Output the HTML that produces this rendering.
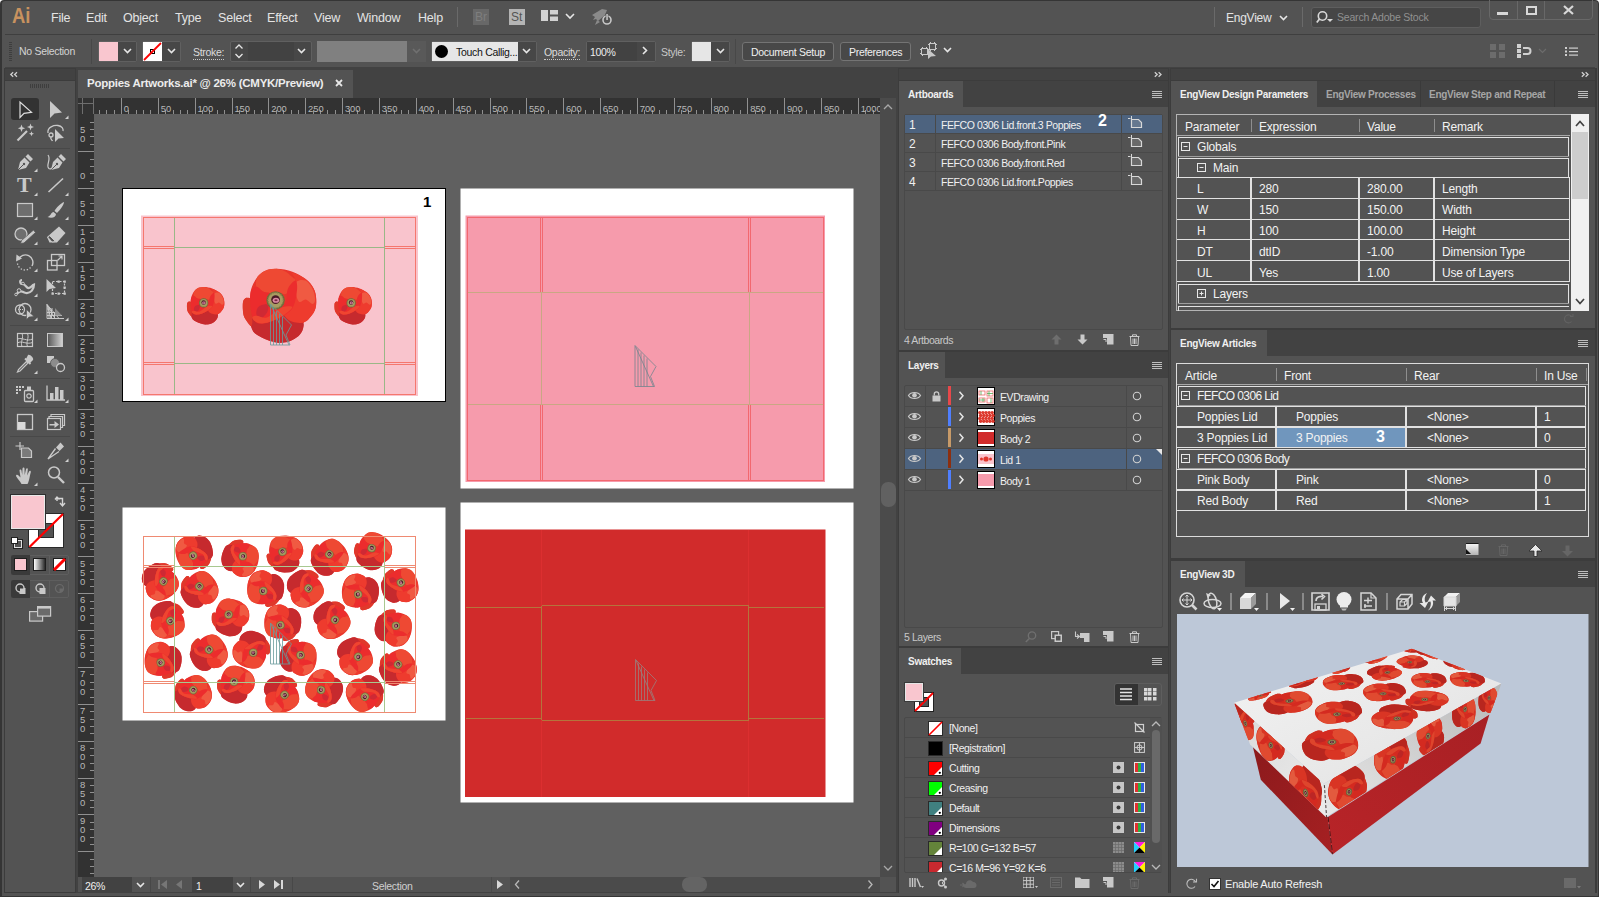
<!DOCTYPE html>
<html><head><meta charset="utf-8"><title>Poppies Artworks.ai</title>
<style>
*{box-sizing:border-box;margin:0;padding:0}
html,body{width:1600px;height:898px;overflow:hidden;background:#535353}
body{font-family:"Liberation Sans",sans-serif;font-size:11px;color:#dcdcdc;position:relative}
.a{position:absolute}
.pb{background:#535353}
.dk{background:#424242}
.t{position:absolute;white-space:nowrap;line-height:1;color:#dcdcdc}
.b{font-weight:bold}
svg{position:absolute;overflow:visible}
.chev{fill:none;stroke:#e6e6e6;stroke-width:1.6}
.ul{border-bottom:1px dotted #c8c8c8;padding-bottom:1px}
</style></head><body>
<!-- window frame -->
<div class="a" style="left:0;top:0;width:1600px;height:898px;background:#fff"></div>
<div class="a" style="left:0;top:0;width:1599px;height:897px;background:#353535;border-radius:4px 4px 0 0"></div>
<div class="a" style="left:2px;top:1px;width:1596px;height:895px;background:#535353;border-radius:3px 3px 0 0"></div>
<div class="a dk" style="left:5px;top:67px;width:1590px;height:826px"></div>
<!-- MENUBAR -->
<div class="a" style="left:5px;top:34px;width:1590px;height:1px;background:#3f3f3f"></div>
<div class="t b" style="left:11.5px;top:5px;font-size:22px;color:#c8925f;transform:scaleX(0.84);transform-origin:left">Ai</div>
<div class="t" style="left:51px;top:12px;font-size:12.5px;letter-spacing:-0.2px;color:#e4e4e4">File</div>
<div class="t" style="left:86px;top:12px;font-size:12.5px;letter-spacing:-0.2px;color:#e4e4e4">Edit</div>
<div class="t" style="left:123px;top:12px;font-size:12.5px;letter-spacing:-0.2px;color:#e4e4e4">Object</div>
<div class="t" style="left:175px;top:12px;font-size:12.5px;letter-spacing:-0.2px;color:#e4e4e4">Type</div>
<div class="t" style="left:218px;top:12px;font-size:12.5px;letter-spacing:-0.2px;color:#e4e4e4">Select</div>
<div class="t" style="left:267px;top:12px;font-size:12.5px;letter-spacing:-0.2px;color:#e4e4e4">Effect</div>
<div class="t" style="left:314px;top:12px;font-size:12.5px;letter-spacing:-0.2px;color:#e4e4e4">View</div>
<div class="t" style="left:357px;top:12px;font-size:12.5px;letter-spacing:-0.2px;color:#e4e4e4">Window</div>
<div class="t" style="left:418px;top:12px;font-size:12.5px;letter-spacing:-0.2px;color:#e4e4e4">Help</div>
<div class="a" style="left:457px;top:7px;width:1px;height:20px;background:#6a6a6a"></div>
<div class="a" style="left:473px;top:9px;width:16px;height:16px;background:#686868"></div>
<div class="t" style="left:475px;top:11px;font-size:12px;color:#7e7e7e">Br</div>
<div class="a" style="left:509px;top:9px;width:16px;height:16px;background:#b4b4b4"></div>
<div class="t" style="left:511px;top:11px;font-size:12px;color:#555">St</div>
<svg style="left:541px;top:10px" width="18" height="12"><rect x="0" y="0" width="7" height="11" fill="#d2d2d2"/><rect x="9" y="0" width="8" height="4.5" fill="#d2d2d2"/><rect x="9" y="6.5" width="8" height="4.5" fill="#d2d2d2"/></svg>
<svg style="left:565px;top:13px" width="10" height="6"><path class="chev" d="M1 1 L5 5 L9 1"/></svg>
<svg style="left:590px;top:7px" width="24" height="20"><path d="M2 8 L12 2 L17 3 L15 8 L8 14 L6 12 L3 13 L5 10 Z" fill="#8a8a8a"/><path d="M7 13 L5 18 L10 15Z" fill="#8a8a8a"/><circle cx="17" cy="13" r="4" fill="none" stroke="#c8c8c8" stroke-width="1.6"/><rect x="15.6" y="6.5" width="2.8" height="7" fill="#535353"/><rect x="16.3" y="7" width="1.5" height="6" fill="#c8c8c8"/></svg>
<!-- right side -->
<div class="a" style="left:1214px;top:7px;width:1px;height:20px;background:#6a6a6a"></div>
<div class="t" style="left:1226px;top:12px;font-size:12px;letter-spacing:-0.25px;color:#e4e4e4">EngView</div>
<svg style="left:1279px;top:15px" width="10" height="6"><path class="chev" d="M1 1 L4.5 4.5 L8 1"/></svg>
<div class="a" style="left:1302px;top:7px;width:1px;height:20px;background:#6a6a6a"></div>
<div class="a" style="left:1311px;top:7px;width:170px;height:21px;background:#464646;border:1px solid #5e5e5e;border-radius:3px"></div>
<svg style="left:1316px;top:10px" width="18" height="14"><circle cx="6.5" cy="6" r="4.2" fill="none" stroke="#d8d8d8" stroke-width="1.6"/><path d="M3.5 9 L0.8 12.5" stroke="#d8d8d8" stroke-width="1.8"/><path d="M11 9 L17 9 L14 12Z" fill="#d8d8d8"/></svg>
<div class="t" style="left:1337px;top:12px;font-size:10.5px;letter-spacing:-0.2px;color:#919191">Search Adobe Stock</div>
<div class="a" style="left:1489px;top:-3px;width:104px;height:23px;border:1px solid #686868;border-radius:0 0 4px 4px"></div>
<div class="a" style="left:1517px;top:1px;width:1px;height:18px;background:#686868"></div>
<div class="a" style="left:1544px;top:1px;width:1px;height:18px;background:#686868"></div>
<div class="a" style="left:1497px;top:12px;width:11px;height:3px;background:#d8d8d8"></div>
<div class="a" style="left:1526px;top:6px;width:11px;height:9px;border:2px solid #d8d8d8;border-top-width:2px"></div>
<svg style="left:1563px;top:5px" width="11" height="10"><path d="M1 1 L10 9 M10 1 L1 9" stroke="#d8d8d8" stroke-width="2.2"/></svg>

<!-- CONTROLBAR -->
<svg style="left:9px;top:42px" width="4" height="20"><g fill="#3e3e3e"><rect x="0" y="0" width="3" height="1"/><rect x="0" y="2" width="3" height="1"/><rect x="0" y="4" width="3" height="1"/><rect x="0" y="6" width="3" height="1"/><rect x="0" y="8" width="3" height="1"/><rect x="0" y="10" width="3" height="1"/><rect x="0" y="12" width="3" height="1"/><rect x="0" y="14" width="3" height="1"/><rect x="0" y="16" width="3" height="1"/><rect x="0" y="18" width="3" height="1"/></g></svg>
<div class="t" style="left:19px;top:46px;font-size:10.5px;letter-spacing:-0.3px;color:#d4d4d4">No Selection</div>
<div class="a" style="left:91px;top:39px;width:1px;height:25px;background:#484848"></div>
<!-- fill -->
<div class="a" style="left:98px;top:41px;width:39px;height:21px;border:1px solid #606060;border-radius:2px"></div>
<div class="a" style="left:118px;top:42px;width:18px;height:19px;background:#474747"></div>
<div class="a" style="left:99px;top:42px;width:19px;height:19px;background:#f9c6cf"></div>
<svg style="left:123px;top:48px" width="10" height="6"><path class="chev" d="M1 1 L4.5 4.5 L8 1"/></svg>
<!-- stroke -->
<div class="a" style="left:142px;top:41px;width:39px;height:21px;border:1px solid #606060;border-radius:2px"></div>
<div class="a" style="left:162px;top:42px;width:18px;height:19px;background:#474747"></div>
<div class="a" style="left:143px;top:42px;width:19px;height:19px;background:#fff"></div>
<svg style="left:143px;top:42px" width="19" height="19"><rect x="7.5" y="7.5" width="4" height="4" fill="none" stroke="#000" stroke-width="1"/><path d="M1 18 L18 1" stroke="#f00" stroke-width="1.8"/></svg>
<svg style="left:167px;top:48px" width="10" height="6"><path class="chev" d="M1 1 L4.5 4.5 L8 1"/></svg>
<div class="t" style="left:193px;top:47px;font-size:10.5px;letter-spacing:-0.3px;color:#dcdcdc"><span class="ul">Stroke:</span></div>
<div class="a" style="left:230px;top:41px;width:82px;height:21px;border:1px solid #606060;border-radius:2px;background:#474747"></div>
<div class="a" style="left:248px;top:42px;width:46px;height:19px;background:#424242"></div>
<svg style="left:234px;top:44px" width="10" height="15"><path class="chev" d="M1.5 4.5 L5 1 L8.5 4.5 M1.5 10 L5 13.5 L8.5 10" style="stroke-width:1.3"/></svg>
<svg style="left:297px;top:48px" width="10" height="6"><path class="chev" d="M1 1 L4.5 4.5 L8 1"/></svg>
<div class="a" style="left:317px;top:41px;width:90px;height:21px;background:#808080"></div>
<div class="a" style="left:407px;top:41px;width:19px;height:21px;background:#595959"></div>
<svg style="left:412px;top:48px" width="10" height="6"><path class="chev" d="M1 1 L4.5 4.5 L8 1" style="stroke:#707070"/></svg>
<!-- brush -->
<div class="a" style="left:431px;top:41px;width:106px;height:21px;border:1px solid #606060;border-radius:2px"></div>
<div class="a" style="left:518px;top:42px;width:18px;height:19px;background:#474747"></div>
<div class="a" style="left:432px;top:42px;width:86px;height:19px;background:#e6e6e6"></div>
<div class="a" style="left:435px;top:45px;width:13px;height:13px;background:#000;border-radius:50%"></div>
<div class="t" style="left:456px;top:47px;font-size:10.5px;letter-spacing:-0.3px;color:#111">Touch Callig...</div>
<svg style="left:522px;top:48px" width="10" height="6"><path class="chev" d="M1 1 L4.5 4.5 L8 1"/></svg>
<div class="t" style="left:544px;top:47px;font-size:10.5px;letter-spacing:-0.3px;color:#dcdcdc"><span class="ul">Opacity:</span></div>
<div class="a" style="left:586px;top:41px;width:70px;height:21px;border:1px solid #606060;border-radius:2px"></div>
<div class="a" style="left:637px;top:42px;width:18px;height:19px;background:#474747"></div>
<div class="a" style="left:587px;top:42px;width:50px;height:19px;background:#424242"></div>
<div class="t" style="left:590px;top:47px;font-size:10.5px;letter-spacing:-0.3px;color:#ececec">100%</div>
<svg style="left:642px;top:46px" width="7" height="10"><path class="chev" d="M1 1 L4.5 4.5 L1 8"/></svg>
<div class="t" style="left:661px;top:47px;font-size:10.5px;letter-spacing:-0.3px;color:#c8c8c8">Style:</div>
<div class="a" style="left:691px;top:41px;width:39px;height:21px;border:1px solid #606060;border-radius:2px"></div>
<div class="a" style="left:711px;top:42px;width:18px;height:19px;background:#474747"></div>
<div class="a" style="left:692px;top:42px;width:19px;height:19px;background:#e6e6e6"></div>
<svg style="left:716px;top:48px" width="10" height="6"><path class="chev" d="M1 1 L4.5 4.5 L8 1"/></svg>
<div class="a" style="left:735px;top:39px;width:1px;height:25px;background:#484848"></div>
<div class="a" style="left:742px;top:42px;width:92px;height:19px;border:1px solid #747474;border-radius:3px;background:#484848"></div>
<div class="t" style="left:751px;top:47px;font-size:10.5px;letter-spacing:-0.3px;color:#f0f0f0">Document Setup</div>
<div class="a" style="left:840px;top:42px;width:71px;height:19px;border:1px solid #747474;border-radius:3px;background:#484848"></div>
<div class="t" style="left:849px;top:47px;font-size:10.5px;letter-spacing:-0.3px;color:#f0f0f0">Preferences</div>
<svg style="left:920px;top:42px" width="18" height="18"><rect x="1.5" y="6.500" width="6" height="6" fill="none" stroke="#c8c8c8"/><rect x="9.5" y="1.5" width="6" height="6" fill="none" stroke="#c8c8c8"/><path d="M0 7.500h1.500 M0 11.500h1.500 M7.500 7.500h1.500 M7.500 11.500 h1.500M2.500 5v1.500M6.500 5v1.500M2.500 12.500v1.500M10.500 0v1.500M14.500 0v1.500M10.500 7.500v1.500M14.500 7.500v1.500M8 2.500h1.500M15.500 2.500h1.500M15.500 6.500h1.500" stroke="#c8c8c8"/><path d="M8 7 L8 17 L11 14.500 L16 14 Z" fill="#c8c8c8"/></svg>
<svg style="left:943px;top:47px" width="10" height="6"><path class="chev" d="M1 1 L4.5 4.5 L8 1"/></svg>
<!-- right icons -->
<svg style="left:1490px;top:44px" width="18" height="15"><g fill="#6c6c6c"><rect x="0" y="0" width="6" height="6"/><rect x="9" y="0" width="6" height="6"/><rect x="0" y="8" width="6" height="6"/><rect x="9" y="8" width="6" height="6"/></g></svg>
<svg style="left:1516px;top:43px" width="18" height="16"><g fill="#d0d0d0"><rect x="1" y="1" width="4" height="4"/><rect x="1" y="6" width="4" height="4"/><rect x="1" y="11" width="4" height="4"/></g><path d="M7 5 H11.500 A3 3 0 0 1 11.500 11 H7" fill="none" stroke="#d0d0d0" stroke-width="2"/></svg>
<svg style="left:1538px;top:48px" width="10" height="6"><path class="chev" d="M1 1 L4.5 4.5 L8 1" style="stroke:#6c6c6c;stroke-width:1.2"/></svg>
<svg style="left:1565px;top:46px" width="14" height="11"><g fill="#d0d0d0"><rect x="0" y="1" width="2" height="2"/><rect x="4" y="1.500" width="9" height="1.200"/><rect x="0" y="4.500" width="2" height="2"/><rect x="4" y="5" width="9" height="1.200"/><rect x="0" y="8" width="2" height="2"/><rect x="4" y="8.500" width="9" height="1.200"/></g></svg>

<!-- TOOLS -->
<div class="a" style="left:4px;top:68px;width:72px;height:825px;background:#3c3c3c"></div>
<div class="a dk" style="left:5px;top:69px;width:70px;height:11px"></div>
<div class="a pb" style="left:5px;top:81px;width:70px;height:811px"></div>
<svg style="left:10px;top:72px" width="8" height="5"><path d="M3.200 0.300 L0.800 2.500 L3.200 4.700 M7 0.300 L4.600 2.500 L7 4.700" fill="none" stroke="#d0d0d0" stroke-width="1.300"/></svg>
<svg style="left:30px;top:84px" width="20" height="4"><g fill="#3e3e3e"><rect x="0" y="0" width="1" height="4"/><rect x="2" y="0" width="1" height="4"/><rect x="4" y="0" width="1" height="4"/><rect x="6" y="0" width="1" height="4"/><rect x="8" y="0" width="1" height="4"/><rect x="10" y="0" width="1" height="4"/><rect x="12" y="0" width="1" height="4"/><rect x="14" y="0" width="1" height="4"/><rect x="16" y="0" width="1" height="4"/><rect x="18" y="0" width="1" height="4"/></g></svg>
<div class="a" style="left:10px;top:148px;width:60px;height:1px;background:#484848"></div>
<div class="a" style="left:10px;top:248px;width:60px;height:1px;background:#484848"></div>
<div class="a" style="left:10px;top:325px;width:60px;height:1px;background:#484848"></div>
<div class="a" style="left:10px;top:378px;width:60px;height:1px;background:#484848"></div>
<div class="a" style="left:10px;top:407px;width:60px;height:1px;background:#484848"></div>
<div class="a" style="left:10px;top:436px;width:60px;height:1px;background:#484848"></div>
<div class="a" style="left:10px;top:489px;width:60px;height:1px;background:#484848"></div>
<div class="a" style="left:11px;top:98px;width:28px;height:22px;background:#323232;border-radius:3px"></div>
<svg style="left:25.0px;top:109.0px" width="1" height="1"><g fill="none" stroke="#c9c9c9" stroke-width="1.300"><path d="M-5 -7 L-5 8.500 L-1 4.300 L6.500 3.300 Z" stroke="#dedede" stroke-width="1.200"/></g></svg>
<svg style="left:55.5px;top:109.0px" width="1" height="1"><g fill="none" stroke="#c9c9c9" stroke-width="1.300"><path d="M-6 -8 L-6 9 L-1.500 4.500 L6 3.500 Z" fill="#c9c9c9" stroke="none"/></g><path d="M9 10 L12.500 10 L12.500 6.500 Z" fill="#d0d0d0"/></svg>
<svg style="left:25.0px;top:133.0px" width="1" height="1"><g fill="none" stroke="#c9c9c9" stroke-width="1.300"><path d="M-7.500 7.500 L2 -2" stroke-width="2.200"/><path d="M5.500 -9.500 L6.400 -7 L9 -6 L6.400 -5 L5.500 -2.500 L4.600 -5 L2 -6 L4.600 -7Z M-3.500 -8.500 L-2.500 -5.800 L0.200 -4.800 L-2.500 -3.800 L-3.500 -1 L-4.500 -3.800 L-7.200 -4.800 L-4.500 -5.800Z M6.500 -1.800 L7.200 0 L9 0.700 L7.200 1.400 L6.500 3.200 L5.800 1.400 L4 0.700 L5.800 0Z" fill="#c9c9c9" stroke="none"/></g></svg>
<svg style="left:55.5px;top:133.0px" width="1" height="1"><g fill="none" stroke="#c9c9c9" stroke-width="1.300"><path d="M-8 0 C-9 -6 -2 -8 2 -7.500 C6 -7 7.500 -4 7 -2" stroke-width="1.300"/><circle cx="-5" cy="2" r="2"/><path d="M-5 4 C-6 6 -4 7 -3.500 8" /><path d="M-1 -4 L-1 9 L2.500 5.500 L8 5 Z" fill="#c9c9c9" stroke="none"/></g></svg>
<svg style="left:25.0px;top:162.0px" width="1" height="1"><g fill="none" stroke="#c9c9c9" stroke-width="1.300"><path d="M3 -8 L8 -3 L5.500 -0.500 L0.500 -5.500 Z M-0.500 -4.500 L4.500 0.500 L1 6 L-7 8 L-5 0 Z" fill="#c9c9c9" stroke="none"/><path d="M-7 8 L-1.500 2.500" stroke="#535353" stroke-width="1"/><circle cx="-1" cy="2" r="1.200" fill="#535353" stroke="none"/></g><path d="M9 10 L12.500 10 L12.500 6.500 Z" fill="#d0d0d0"/></svg>
<svg style="left:57.5px;top:162.0px" width="1" height="1"><g fill="none" stroke="#c9c9c9" stroke-width="1.300"><path d="M3 -8 L8 -3 L5.500 -0.500 L0.500 -5.500 Z M-0.500 -4.500 L4.500 0.500 L1 6 L-7 8 L-5 0 Z" fill="#c9c9c9" stroke="none"/><path d="M-7 8 L-1.500 2.500" stroke="#535353" stroke-width="1"/><circle cx="-1" cy="2" r="1.200" fill="#535353" stroke="none"/><path d="M-10 -7 C-7 -3 -11 1 -10 5 C-9 8 -7 7 -6 6" stroke-width="1.200"/></g></svg>
<div class="t b" style="left:17px;top:174px;font-family:'Liberation Serif',serif;font-size:22px;color:#c9c9c9">T</div>
<svg style="left:25.0px;top:186.0px" width="1" height="1"><g fill="none" stroke="#c9c9c9" stroke-width="1.300"></g><path d="M9 10 L12.500 10 L12.500 6.500 Z" fill="#d0d0d0"/></svg>
<svg style="left:55.5px;top:186.0px" width="1" height="1"><g fill="none" stroke="#c9c9c9" stroke-width="1.300"><path d="M-7.500 6 L7 -7.500" stroke-width="1.600"/></g><path d="M9 10 L12.500 10 L12.500 6.500 Z" fill="#d0d0d0"/></svg>
<svg style="left:25.0px;top:210.0px" width="1" height="1"><g fill="none" stroke="#c9c9c9" stroke-width="1.300"><rect x="-7.500" y="-6.500" width="15" height="13" fill="#6e6e6e" stroke-width="1.200"/></g><path d="M9 10 L12.500 10 L12.500 6.500 Z" fill="#d0d0d0"/></svg>
<svg style="left:55.5px;top:210.0px" width="1" height="1"><g fill="none" stroke="#c9c9c9" stroke-width="1.300"><path d="M8 -8 C5 -7 0 -2 -1.500 1 L1 3 C4 0 8 -5 8 -8Z M-2.500 2 C-5 2 -5 6 -8.500 7 C-4 9 0 7 0 4 Z" fill="#c9c9c9" stroke="none"/></g><path d="M9 10 L12.500 10 L12.500 6.500 Z" fill="#d0d0d0"/></svg>
<svg style="left:25.0px;top:235.0px" width="1" height="1"><g fill="none" stroke="#c9c9c9" stroke-width="1.300"><circle cx="-4" cy="-1" r="6" fill="#6e6e6e" stroke-width="1.300"/><path d="M8.500 -5 L10.500 -2.500 L-1 8 L-4.500 8.500 L-3.500 5.500 Z" fill="#c9c9c9" stroke="#535353" stroke-width="0.800"/></g><path d="M9 10 L12.500 10 L12.500 6.500 Z" fill="#d0d0d0"/></svg>
<svg style="left:55.5px;top:235.0px" width="1" height="1"><g fill="none" stroke="#c9c9c9" stroke-width="1.300"><path d="M3 -8.500 L9.500 -2 L1 7.500 L-6.500 7.500 L-9 2 Z" fill="#c9c9c9" stroke="none"/><path d="M-6.500 0.500 L-0.500 6.500 L-4 7 L-8 2.500Z" fill="#535353" stroke="#c9c9c9" stroke-width="1"/></g><path d="M9 10 L12.500 10 L12.500 6.500 Z" fill="#d0d0d0"/></svg>
<svg style="left:25.0px;top:262.0px" width="1" height="1"><g fill="none" stroke="#c9c9c9" stroke-width="1.300"><path d="M-6.500 -2.500 A7.500 7.500 0 1 1 7 4" stroke-width="1.400" /><path d="M5.500 5.500 A7.500 7.500 0 0 1 -7.500 1.500" stroke-width="1.300" stroke-dasharray="1.300 1.800"/><path d="M-8.500 -7.500 L-3 -3.500 L-9 -0.500 Z" fill="#c9c9c9" stroke="none"/></g><path d="M9 10 L12.500 10 L12.500 6.500 Z" fill="#d0d0d0"/></svg>
<svg style="left:55.5px;top:262.0px" width="1" height="1"><g fill="none" stroke="#c9c9c9" stroke-width="1.300"><rect x="-8.500" y="-1.500" width="9.500" height="9.500"/><rect x="-4.500" y="-7.500" width="13" height="11"/><path d="M1.500 -1.500 L6 -6 M2.500 -6 L6 -6 L6 -2.500" stroke-width="1.200"/></g><path d="M9 10 L12.500 10 L12.500 6.500 Z" fill="#d0d0d0"/></svg>
<svg style="left:25.0px;top:287.0px" width="1" height="1"><g fill="none" stroke="#c9c9c9" stroke-width="1.300"><path d="M-3 -7 C-6 -7 -5 -3 -2.500 -3 C1 -3 1 1.500 4 1 C7 0 7 -2 9 -2.500 C9 2 6 6.500 1 6 C-3 5.500 -3 3 -6 5 C-8 6.500 -9 7.500 -9.500 7.500" stroke-width="2.200"/><circle cx="-6" cy="3.500" r="1.800" fill="#535353" stroke-width="1"/><circle cx="-2" cy="-3.500" r="1.300" fill="#535353" stroke-width="0.900"/><circle cx="-9" cy="7.500" r="1.300" fill="#535353" stroke-width="0.900"/></g><path d="M9 10 L12.500 10 L12.500 6.500 Z" fill="#d0d0d0"/></svg>
<svg style="left:55.5px;top:287.0px" width="1" height="1"><g fill="none" stroke="#c9c9c9" stroke-width="1.300"><rect x="-3.500" y="-5.500" width="12" height="12" stroke-dasharray="2 1.500" stroke-width="1.200"/><path d="M-9.500 -8 L-9.500 5 L-6.500 2 L0 1 Z" fill="#c9c9c9" stroke="none"/><g fill="#c9c9c9" stroke="none"><rect x="7.500" y="-6.500" width="2.300" height="2.300"/><rect x="7.500" y="5.500" width="2.300" height="2.300"/><rect x="-4.500" y="5.500" width="2.300" height="2.300"/><rect x="1.500" y="-6.500" width="2.300" height="2.300"/><rect x="7.500" y="-0.500" width="2.300" height="2.300"/><rect x="1.500" y="5.500" width="2.300" height="2.300"/></g></g></svg>
<svg style="left:25.0px;top:311.0px" width="1" height="1"><g fill="none" stroke="#c9c9c9" stroke-width="1.300"><ellipse cx="-5" cy="-1.500" rx="4.500" ry="4.500"/><ellipse cx="0" cy="-1.500" rx="6" ry="6"/><path d="M-7 -1.500 H0" stroke-dasharray="1 1" stroke-width="1"/><path d="M1.500 -1.500 L1.500 8.500 L4 6 L9 5.500 Z" fill="#c9c9c9" stroke="#535353" stroke-width="0.600"/></g><path d="M9 10 L12.500 10 L12.500 6.500 Z" fill="#d0d0d0"/></svg>
<svg style="left:55.5px;top:311.0px" width="1" height="1"><g fill="none" stroke="#c9c9c9" stroke-width="1.300"><path d="M-9 -6.500 L-9 7.500 L8 7.500 M-9 -6.500 L3 7.500 M-9 -6.500 L-1 7.500 M-9 -6.500 L-5 7.500 M-7 -4 L-7 7.500 M-4.500 -1 L-4.500 7.500 M-1.500 2 L-1.500 7.500 M-9 4.500 L6 4.500 M-9 1.500 L3 1.500 M-9 -2 L-3 -2 " stroke-width="1"/><path d="M-1 -3 L6 4.500 L-1 4.500Z" fill="#8a8a8a" stroke="none"/></g><path d="M9 10 L12.500 10 L12.500 6.500 Z" fill="#d0d0d0"/></svg>
<svg style="left:25.0px;top:340.0px" width="1" height="1"><g fill="none" stroke="#c9c9c9" stroke-width="1.300"><rect x="-7.500" y="-6.500" width="15" height="13" stroke-width="1.200"/><path d="M-7.500 -1 C-3 -3 2 2 7.500 -1 M-7.500 3 C-3 0 1 5 7.500 2.500 M-3 -6.500 C-1 -2 -5 2 -3 6.500 M2.500 -6.500 C4.500 -2 0.500 2 2.500 6.500" stroke-width="1"/></g></svg>
<div class="a" style="left:47px;top:333px;width:16px;height:14px;border:1px solid #c9c9c9;background:linear-gradient(90deg,#5a5a5a,#cfcfcf)"></div>
<svg style="left:25.0px;top:364.0px" width="1" height="1"><g fill="none" stroke="#c9c9c9" stroke-width="1.300"><path d="M3 -9 C5 -10 9 -6 8 -4 L5 -1 L1 -5 Z" fill="#c9c9c9" stroke="none"/><path d="M0 -5.500 L5.500 0" stroke-width="1.800"/><path d="M1.500 -2.500 L-6.500 5.500 L-7.500 8 L-5 7 L3 -1 Z" stroke-width="1.200"/></g><path d="M9 10 L12.500 10 L12.500 6.500 Z" fill="#d0d0d0"/></svg>
<svg style="left:55.5px;top:364.0px" width="1" height="1"><g fill="none" stroke="#c9c9c9" stroke-width="1.300"><rect x="-9" y="-8" width="7" height="7" fill="#c9c9c9" stroke="none"/><circle cx="-1" cy="-1" r="4.500" fill="#8c8c8c" stroke="#535353" stroke-width="0.800"/><circle cx="4.500" cy="3.500" r="4" fill="#535353" stroke-width="1.300"/></g></svg>
<svg style="left:25.0px;top:393.0px" width="1" height="1"><g fill="none" stroke="#c9c9c9" stroke-width="1.300"><rect x="-0.500" y="-2.500" width="9" height="11" rx="1" stroke-width="1.300"/><rect x="2" y="-6.500" width="4" height="4" fill="#c9c9c9" stroke="none"/><circle cx="4" cy="3" r="2.200" stroke-width="1.200"/><g fill="#c9c9c9" stroke="none"><rect x="-9" y="-7" width="2" height="2"/><rect x="-6" y="-7" width="2" height="2"/><rect x="-3" y="-7" width="2" height="2"/><rect x="-9" y="-4" width="2" height="2"/><rect x="-6" y="-4" width="2" height="2"/><rect x="-9" y="-1" width="2" height="2"/></g></g><path d="M9 10 L12.500 10 L12.500 6.500 Z" fill="#d0d0d0"/></svg>
<svg style="left:55.5px;top:393.0px" width="1" height="1"><g fill="none" stroke="#c9c9c9" stroke-width="1.300"><path d="M-9 -7.500 L-9 7 L9 7" stroke-width="1.300"/><g fill="#c9c9c9" stroke="none"><rect x="-6" y="0" width="3.500" height="7"/><rect x="-1" y="-6" width="3.500" height="13"/><rect x="4" y="-3" width="3.500" height="10"/></g></g><path d="M9 10 L12.500 10 L12.500 6.500 Z" fill="#d0d0d0"/></svg>
<svg style="left:25.0px;top:422.0px" width="1" height="1"><g fill="none" stroke="#c9c9c9" stroke-width="1.300"><rect x="-7.500" y="-7.500" width="15" height="15" fill="none" stroke="#c9c9c9" stroke-width="1.300"/><rect x="-7" y="0" width="7.500" height="7" fill="#dadada" stroke="none"/></g></svg>
<svg style="left:55.5px;top:422.0px" width="1" height="1"><g fill="none" stroke="#c9c9c9" stroke-width="1.300"><path d="M-5 -5.500 V-7.500 H8.500 V3.500 H6.500 M-7 -3.500 V-5.500 H6.500 V5.500 H4.500" stroke-width="1.200"/><rect x="-8.500" y="-3.500" width="13" height="11" fill="#535353" stroke-width="1.200"/><path d="M-6.500 2 H-1.500 V-1 L3 2.500 L-1.500 6 V3.500 H-6.500Z" fill="#c9c9c9" stroke="none"/></g></svg>
<svg style="left:25.0px;top:452.0px" width="1" height="1"><g fill="none" stroke="#c9c9c9" stroke-width="1.300"><path d="M-5 -10 V-2 M-9.500 -6 H-1" stroke-width="1.200"/><path d="M-3.500 -4 H3.500 L6.500 -1 V5.500 H-3.500Z" fill="#7a7a7a" stroke-width="1.200"/></g></svg>
<svg style="left:55.5px;top:452.0px" width="1" height="1"><g fill="none" stroke="#c9c9c9" stroke-width="1.300"><path d="M4.500 -9.500 L8 -5.500 L3.500 -1 L0 -4.500 Z" fill="#c9c9c9" stroke="none"/><path d="M-0.500 -3.500 L-8 7 L3 -0.500" stroke-width="1.300"/></g><path d="M9 10 L12.500 10 L12.500 6.500 Z" fill="#d0d0d0"/></svg>
<svg style="left:25.0px;top:475.5px" width="1" height="1"><g fill="none" stroke="#c9c9c9" stroke-width="1.300"><path d="M-3.500 8 C-5 5 -8 2 -9 0 C-9 -1.500 -7.500 -1.500 -6.500 -0.500 L-4.500 1.500 L-5.500 -5.500 C-5.500 -7 -3.800 -7 -3.500 -5.500 L-2.800 -1 L-2.500 -7.500 C-2.300 -9 -0.500 -9 -0.500 -7.500 L-0.300 -1 L1 -6.800 C1.300 -8.200 3 -8 2.800 -6.500 L2.200 -0.500 L4 -4.500 C4.600 -5.800 6.200 -5.200 5.800 -3.800 C5 -1 4.500 2 4 4 C3.500 6 3 7 2.500 8 Z" fill="#c9c9c9" stroke="none"/></g><path d="M9 10 L12.500 10 L12.500 6.500 Z" fill="#d0d0d0"/></svg>
<svg style="left:55.5px;top:475.0px" width="1" height="1"><g fill="none" stroke="#c9c9c9" stroke-width="1.300"><circle cx="-2" cy="-2.500" r="5.500" stroke-width="1.500"/><path d="M2 2 L8 8" stroke-width="2.400"/></g></svg>
<div class="a" style="left:28px;top:513px;width:36px;height:35px;background:#fff;border:1px solid #2a2a2a"></div>
<div class="a" style="left:38px;top:523px;width:16px;height:15px;background:#535353;border:1px solid #2a2a2a"></div>
<svg style="left:28px;top:513px" width="36" height="35"><path d="M1.500 34 L35 1" stroke="#f00" stroke-width="2.200"/></svg>
<div class="a" style="left:10px;top:494px;width:36px;height:36px;background:#f9c6cf;border:1px solid #2f2f2f;box-shadow:inset 0 0 0 1px #e9e9e9"></div>
<svg style="left:54px;top:496px" width="12" height="12"><path d="M3 1.500 L3 5 M1 3.500 L3 1 L5.500 3.500 M3 2.500 H8.500 V9 M6 7 L8.500 10 L11 7" fill="none" stroke="#d4d4d4" stroke-width="1.400"/></svg>
<div class="a" style="left:14px;top:540px;width:8px;height:8px;background:#535353;border:1px solid #e0e0e0;box-shadow:0 0 0 1px #222"></div>
<div class="a" style="left:11px;top:537px;width:7px;height:7px;background:#fff;border:1px solid #222"></div>
<div class="a" style="left:11px;top:555px;width:58px;height:20px;border:1px solid #5e5e5e;border-radius:2px"></div>
<div class="a" style="left:11px;top:555px;width:19px;height:20px;background:#3a3a3a;border-radius:2px 0 0 2px"></div>
<div class="a" style="left:49px;top:556px;width:1px;height:18px;background:#5e5e5e"></div>
<div class="a" style="left:14px;top:558px;width:13px;height:13px;background:#f9c6cf;border:1px solid #1e1e1e"></div>
<div class="a" style="left:33px;top:558px;width:13px;height:13px;background:linear-gradient(90deg,#fff,#2a2a2a);border:1px solid #1e1e1e"></div>
<div class="a" style="left:53px;top:558px;width:13px;height:13px;background:#fff;border:1px solid #1e1e1e"></div>
<svg style="left:53px;top:558px" width="13" height="13"><path d="M1 12 L12 1" stroke="#f00" stroke-width="3"/></svg>
<div class="a" style="left:11px;top:580px;width:58px;height:18px;border:1px solid #5e5e5e;border-radius:2px"></div>
<div class="a" style="left:11px;top:580px;width:19px;height:18px;background:#3a3a3a;border-radius:2px 0 0 2px"></div>
<div class="a" style="left:49px;top:581px;width:1px;height:16px;background:#5e5e5e"></div>
<svg style="left:15px;top:583px" width="12" height="12"><rect x="4.500" y="5" width="6" height="6" fill="#c9c9c9"/><circle cx="5" cy="5" r="4" fill="#3a3a3a" stroke="#c9c9c9" stroke-width="1.400"/><rect x="5" y="5.500" width="5" height="5" fill="#c9c9c9"/></svg>
<svg style="left:35px;top:583px" width="12" height="12"><rect x="4.500" y="5" width="6" height="6" fill="#c9c9c9"/><circle cx="5" cy="5" r="4" fill="none" stroke="#c9c9c9" stroke-width="1.400"/></svg>
<svg style="left:54px;top:583px" width="12" height="12"><circle cx="5.500" cy="5.500" r="4" fill="none" stroke="#6a6a6a" stroke-width="1.200"/><path d="M5.500 5.500 h4 a4 4 0 0 1 -4 4z" fill="#6a6a6a"/></svg>
<svg style="left:29px;top:606px" width="23" height="16"><rect x="0.600" y="5.600" width="13" height="9.500" fill="#6a6a6a" stroke="#c9c9c9" stroke-width="1.200"/><rect x="8.600" y="0.600" width="13" height="9.500" fill="#6a6a6a" stroke="#c9c9c9" stroke-width="1.200"/><rect x="8.600" y="0.600" width="13" height="2" fill="#c9c9c9"/></svg>

<!-- DOC -->
<div class="a pb" style="left:78px;top:70px;width:275px;height:28px"></div>
<div class="t b" style="left:87px;top:78px;font-size:11.5px;color:#ececec;letter-spacing:-0.25px">Poppies Artworks.ai* @ 26% (CMYK/Preview)</div>
<svg style="left:335px;top:79px" width="8" height="8"><path d="M1 1 L7 7 M7 1 L1 7" stroke="#e6e6e6" stroke-width="1.800"/></svg>
<div class="a" style="left:78px;top:98px;width:802px;height:16px;background:#323232"></div>
<div class="a" style="left:78px;top:114px;width:16px;height:763px;background:#323232"></div>
<div class="a" style="left:94px;top:114px;width:786px;height:763px;background:#606060"></div>
<svg style="left:0;top:0" width="1600" height="898"><g stroke="#909090" stroke-width="1" shape-rendering="crispEdges"><path d="M78 103.500 H94 M82.500 98 V114 M93.500 98 V114" stroke="#6e6e6e"/><path d="M99.5 110 V114"/><path d="M106.5 110 V114"/><path d="M114.5 110 V114"/><path d="M121.5 98 V114"/><path d="M128.5 110 V114"/><path d="M136.5 110 V114"/><path d="M143.5 110 V114"/><path d="M150.5 110 V114"/><path d="M158.5 98 V114"/><path d="M165.5 110 V114"/><path d="M173.5 110 V114"/><path d="M180.5 110 V114"/><path d="M187.5 110 V114"/><path d="M195.5 98 V114"/><path d="M202.5 110 V114"/><path d="M209.5 110 V114"/><path d="M217.5 110 V114"/><path d="M224.5 110 V114"/><path d="M232.5 98 V114"/><path d="M239.5 110 V114"/><path d="M246.5 110 V114"/><path d="M254.5 110 V114"/><path d="M261.5 110 V114"/><path d="M268.5 98 V114"/><path d="M276.5 110 V114"/><path d="M283.5 110 V114"/><path d="M291.5 110 V114"/><path d="M298.5 110 V114"/><path d="M305.5 98 V114"/><path d="M313.5 110 V114"/><path d="M320.5 110 V114"/><path d="M327.5 110 V114"/><path d="M335.5 110 V114"/><path d="M342.5 98 V114"/><path d="M349.5 110 V114"/><path d="M357.5 110 V114"/><path d="M364.5 110 V114"/><path d="M372.5 110 V114"/><path d="M379.5 98 V114"/><path d="M386.5 110 V114"/><path d="M394.5 110 V114"/><path d="M401.5 110 V114"/><path d="M408.5 110 V114"/><path d="M416.5 98 V114"/><path d="M423.5 110 V114"/><path d="M431.5 110 V114"/><path d="M438.5 110 V114"/><path d="M445.5 110 V114"/><path d="M453.5 98 V114"/><path d="M460.5 110 V114"/><path d="M467.5 110 V114"/><path d="M475.5 110 V114"/><path d="M482.5 110 V114"/><path d="M490.5 98 V114"/><path d="M497.5 110 V114"/><path d="M504.5 110 V114"/><path d="M512.5 110 V114"/><path d="M519.5 110 V114"/><path d="M526.5 98 V114"/><path d="M534.5 110 V114"/><path d="M541.5 110 V114"/><path d="M548.5 110 V114"/><path d="M556.5 110 V114"/><path d="M563.5 98 V114"/><path d="M571.5 110 V114"/><path d="M578.5 110 V114"/><path d="M585.5 110 V114"/><path d="M593.5 110 V114"/><path d="M600.5 98 V114"/><path d="M607.5 110 V114"/><path d="M615.5 110 V114"/><path d="M622.5 110 V114"/><path d="M630.5 110 V114"/><path d="M637.5 98 V114"/><path d="M644.5 110 V114"/><path d="M652.5 110 V114"/><path d="M659.5 110 V114"/><path d="M666.5 110 V114"/><path d="M674.5 98 V114"/><path d="M681.5 110 V114"/><path d="M688.5 110 V114"/><path d="M696.5 110 V114"/><path d="M703.5 110 V114"/><path d="M711.5 98 V114"/><path d="M718.5 110 V114"/><path d="M725.5 110 V114"/><path d="M733.5 110 V114"/><path d="M740.5 110 V114"/><path d="M747.5 98 V114"/><path d="M755.5 110 V114"/><path d="M762.5 110 V114"/><path d="M770.5 110 V114"/><path d="M777.5 110 V114"/><path d="M784.5 98 V114"/><path d="M792.5 110 V114"/><path d="M799.5 110 V114"/><path d="M806.5 110 V114"/><path d="M814.5 110 V114"/><path d="M821.5 98 V114"/><path d="M829.5 110 V114"/><path d="M836.5 110 V114"/><path d="M843.5 110 V114"/><path d="M851.5 110 V114"/><path d="M858.5 98 V114"/><path d="M865.5 110 V114"/><path d="M873.5 110 V114"/><path d="M90 122.5 H94"/><path d="M90 129.5 H94"/><path d="M90 136.5 H94"/><path d="M90 144.5 H94"/><path d="M78 151.5 H94"/><path d="M90 159.5 H94"/><path d="M90 166.5 H94"/><path d="M90 173.5 H94"/><path d="M90 181.5 H94"/><path d="M78 188.5 H94"/><path d="M90 195.5 H94"/><path d="M90 203.5 H94"/><path d="M90 210.5 H94"/><path d="M90 217.5 H94"/><path d="M78 225.5 H94"/><path d="M90 232.5 H94"/><path d="M90 240.5 H94"/><path d="M90 247.5 H94"/><path d="M90 254.5 H94"/><path d="M78 262.5 H94"/><path d="M90 269.5 H94"/><path d="M90 276.5 H94"/><path d="M90 284.5 H94"/><path d="M90 291.5 H94"/><path d="M78 299.5 H94"/><path d="M90 306.5 H94"/><path d="M90 313.5 H94"/><path d="M90 321.5 H94"/><path d="M90 328.5 H94"/><path d="M78 335.5 H94"/><path d="M90 343.5 H94"/><path d="M90 350.5 H94"/><path d="M90 358.5 H94"/><path d="M90 365.5 H94"/><path d="M78 372.5 H94"/><path d="M90 380.5 H94"/><path d="M90 387.5 H94"/><path d="M90 394.5 H94"/><path d="M90 402.5 H94"/><path d="M78 409.5 H94"/><path d="M90 416.5 H94"/><path d="M90 424.5 H94"/><path d="M90 431.5 H94"/><path d="M90 439.5 H94"/><path d="M78 446.5 H94"/><path d="M90 453.5 H94"/><path d="M90 461.5 H94"/><path d="M90 468.5 H94"/><path d="M90 475.5 H94"/><path d="M78 483.5 H94"/><path d="M90 490.5 H94"/><path d="M90 498.5 H94"/><path d="M90 505.5 H94"/><path d="M90 512.5 H94"/><path d="M78 520.5 H94"/><path d="M90 527.5 H94"/><path d="M90 534.5 H94"/><path d="M90 542.5 H94"/><path d="M90 549.5 H94"/><path d="M78 556.5 H94"/><path d="M90 564.5 H94"/><path d="M90 571.5 H94"/><path d="M90 579.5 H94"/><path d="M90 586.5 H94"/><path d="M78 593.5 H94"/><path d="M90 601.5 H94"/><path d="M90 608.5 H94"/><path d="M90 615.5 H94"/><path d="M90 623.5 H94"/><path d="M78 630.5 H94"/><path d="M90 638.5 H94"/><path d="M90 645.5 H94"/><path d="M90 652.5 H94"/><path d="M90 660.5 H94"/><path d="M78 667.5 H94"/><path d="M90 674.5 H94"/><path d="M90 682.5 H94"/><path d="M90 689.5 H94"/><path d="M90 697.5 H94"/><path d="M78 704.5 H94"/><path d="M90 711.5 H94"/><path d="M90 719.5 H94"/><path d="M90 726.5 H94"/><path d="M90 733.5 H94"/><path d="M78 741.5 H94"/><path d="M90 748.5 H94"/><path d="M90 755.5 H94"/><path d="M90 763.5 H94"/><path d="M90 770.5 H94"/><path d="M78 778.5 H94"/><path d="M90 785.5 H94"/><path d="M90 792.5 H94"/><path d="M90 800.5 H94"/><path d="M90 807.5 H94"/><path d="M78 814.5 H94"/><path d="M90 822.5 H94"/><path d="M90 829.5 H94"/><path d="M90 837.5 H94"/><path d="M90 844.5 H94"/><path d="M78 851.5 H94"/><path d="M90 859.5 H94"/><path d="M90 866.5 H94"/><path d="M90 873.5 H94"/></g><g font-family="Liberation Sans, sans-serif" font-size="9.500" fill="#b8b8b8"><text x="123.8" y="112" textLength="5.2" lengthAdjust="spacingAndGlyphs">0</text><text x="160.7" y="112" textLength="10.4" lengthAdjust="spacingAndGlyphs">50</text><text x="197.5" y="112" textLength="15.6" lengthAdjust="spacingAndGlyphs">100</text><text x="234.4" y="112" textLength="15.6" lengthAdjust="spacingAndGlyphs">150</text><text x="271.2" y="112" textLength="15.6" lengthAdjust="spacingAndGlyphs">200</text><text x="308.1" y="112" textLength="15.6" lengthAdjust="spacingAndGlyphs">250</text><text x="344.9" y="112" textLength="15.6" lengthAdjust="spacingAndGlyphs">300</text><text x="381.8" y="112" textLength="15.6" lengthAdjust="spacingAndGlyphs">350</text><text x="418.6" y="112" textLength="15.6" lengthAdjust="spacingAndGlyphs">400</text><text x="455.5" y="112" textLength="15.6" lengthAdjust="spacingAndGlyphs">450</text><text x="492.3" y="112" textLength="15.6" lengthAdjust="spacingAndGlyphs">500</text><text x="529.1" y="112" textLength="15.6" lengthAdjust="spacingAndGlyphs">550</text><text x="566.0" y="112" textLength="15.6" lengthAdjust="spacingAndGlyphs">600</text><text x="602.8" y="112" textLength="15.6" lengthAdjust="spacingAndGlyphs">650</text><text x="639.7" y="112" textLength="15.6" lengthAdjust="spacingAndGlyphs">700</text><text x="676.5" y="112" textLength="15.6" lengthAdjust="spacingAndGlyphs">750</text><text x="713.4" y="112" textLength="15.6" lengthAdjust="spacingAndGlyphs">800</text><text x="750.2" y="112" textLength="15.6" lengthAdjust="spacingAndGlyphs">850</text><text x="787.1" y="112" textLength="15.6" lengthAdjust="spacingAndGlyphs">900</text><text x="823.9" y="112" textLength="15.6" lengthAdjust="spacingAndGlyphs">950</text><text x="860.8" y="112" textLength="20.8" lengthAdjust="spacingAndGlyphs">1000</text><text x="80" y="133.3">5</text><text x="80" y="142.3">0</text><text x="80" y="179.2">0</text><text x="80" y="207.0">5</text><text x="80" y="216.0">0</text><text x="80" y="234.9">1</text><text x="80" y="243.9">0</text><text x="80" y="252.9">0</text><text x="80" y="271.7">1</text><text x="80" y="280.7">5</text><text x="80" y="289.7">0</text><text x="80" y="308.6">2</text><text x="80" y="317.6">0</text><text x="80" y="326.6">0</text><text x="80" y="345.4">2</text><text x="80" y="354.4">5</text><text x="80" y="363.4">0</text><text x="80" y="382.2">3</text><text x="80" y="391.2">0</text><text x="80" y="400.2">0</text><text x="80" y="419.1">3</text><text x="80" y="428.1">5</text><text x="80" y="437.1">0</text><text x="80" y="456.0">4</text><text x="80" y="465.0">0</text><text x="80" y="474.0">0</text><text x="80" y="492.8">4</text><text x="80" y="501.8">5</text><text x="80" y="510.8">0</text><text x="80" y="529.6">5</text><text x="80" y="538.6">0</text><text x="80" y="547.6">0</text><text x="80" y="566.5">5</text><text x="80" y="575.5">5</text><text x="80" y="584.5">0</text><text x="80" y="603.4">6</text><text x="80" y="612.4">0</text><text x="80" y="621.4">0</text><text x="80" y="640.2">6</text><text x="80" y="649.2">5</text><text x="80" y="658.2">0</text><text x="80" y="677.0">7</text><text x="80" y="686.0">0</text><text x="80" y="695.0">0</text><text x="80" y="713.9">7</text><text x="80" y="722.9">5</text><text x="80" y="731.9">0</text><text x="80" y="750.8">8</text><text x="80" y="759.8">0</text><text x="80" y="768.8">0</text><text x="80" y="787.6">8</text><text x="80" y="796.6">5</text><text x="80" y="805.6">0</text><text x="80" y="824.4">9</text><text x="80" y="833.4">0</text><text x="80" y="842.4">0</text></g></svg>
<div class="a pb" style="left:880px;top:98px;width:16px;height:779px;background:#4b4b4b"></div>
<svg style="left:883px;top:104px" width="10" height="6"><path class="chev" d="M1 5 L5 1 L9 5" style="stroke:#a8a8a8;stroke-width:1.300"/></svg>
<svg style="left:883px;top:865px" width="10" height="6"><path class="chev" d="M1 1 L5 5 L9 1" style="stroke:#a8a8a8;stroke-width:1.300"/></svg>
<div class="a" style="left:881px;top:482px;width:15px;height:25px;background:#616161;border-radius:7px"></div>
<div class="a pb" style="left:78px;top:877px;width:818px;height:15px"></div>
<div class="a dk" style="left:82px;top:877px;width:50px;height:15px"></div>
<div class="t" style="left:85px;top:881px;font-size:10.500px;letter-spacing:-0.3px;color:#f0f0f0">26%</div>
<svg style="left:136px;top:882px" width="10" height="6"><path class="chev" d="M1 1 L4.500 4.500 L8 1"/></svg>
<div class="a" style="left:150px;top:877px;width:1px;height:15px;background:#484848"></div>
<svg style="left:158px;top:880px" width="28" height="9"><g fill="#767676"><rect x="0" y="0" width="2" height="9"/><path d="M9 0 L9 9 L3 4.500Z"/><path d="M24 0 L24 9 L18 4.500Z"/></g></svg>
<div class="a dk" style="left:192px;top:877px;width:41px;height:15px"></div>
<div class="t" style="left:196px;top:881px;font-size:10.500px;color:#f0f0f0">1</div>
<svg style="left:236px;top:882px" width="10" height="6"><path class="chev" d="M1 1 L4.500 4.500 L8 1"/></svg>
<div class="a" style="left:250px;top:877px;width:1px;height:15px;background:#484848"></div>
<svg style="left:259px;top:880px" width="26" height="9"><g fill="#d8d8d8"><path d="M0 0 L0 9 L6 4.500Z"/><path d="M15 0 L15 9 L21 4.500Z"/><rect x="22" y="0" width="2" height="9"/></g></svg>
<div class="a" style="left:292px;top:877px;width:1px;height:15px;background:#484848"></div>
<div class="t" style="left:372px;top:881px;font-size:10.500px;letter-spacing:-0.3px;color:#d0d0d0">Selection</div>
<div class="a" style="left:510px;top:877px;width:370px;height:15px;background:#4b4b4b"></div>
<div class="a" style="left:491px;top:877px;width:1px;height:15px;background:#4a4a4a"></div>
<svg style="left:497px;top:880px" width="7" height="9"><path d="M0 0 L0 9 L6 4.500Z" fill="#d8d8d8"/></svg>
<svg style="left:514px;top:880px" width="7" height="9"><path class="chev" d="M5 0.500 L1.500 4.500 L5 8.500" style="stroke:#b8b8b8;stroke-width:1.300"/></svg>
<svg style="left:867px;top:880px" width="7" height="9"><path class="chev" d="M1.500 0.500 L5 4.500 L1.500 8.500" style="stroke:#b8b8b8;stroke-width:1.300"/></svg>
<div class="a" style="left:682px;top:877px;width:25px;height:15px;background:#646464;border-radius:7px"></div>

<!-- ARTBOARDS -->
<svg style="left:0;top:0" width="1600" height="898"><defs>
<g id="pop"><path d="M-8 -100 C4 -100 22 -97 35 -92 C48 -87 61 -80 71 -72 C81 -64 88 -55 93 -46 C98 -37 100 -26 100 -16 C100 -6 100 5 96 14 C92 23 83 33 78 39 C73 45 68 43 65 48 C62 53 65 62 62 69 C59 76 54 82 47 87 C40 92 31 97 23 99 C15 101 6 100 -2 100 C-10 100 -18 99 -26 97 C-34 95 -43 91 -50 87 C-57 83 -64 80 -69 75 C-74 70 -74 64 -78 57 C-82 50 -92 41 -96 33 C-100 25 -100 16 -100 8 C-100 0 -101 -8 -99 -13 C-97 -18 -93 -20 -90 -21 C-87 -22 -83 -16 -81 -19 C-79 -22 -80 -30 -79 -37 C-78 -44 -76 -51 -72 -59 C-68 -67 -62 -77 -56 -83 C-50 -89 -46 -92 -38 -95 C-30 -98 -20 -100 -8 -100Z" fill="#e8352c"/><path d="M-78 57 C-79 50 -80 34 -75 33 C-69 31 -57 49 -44 49 C-32 49 -12 39 1 33 C15 26 27 10 35 11 C42 13 42 36 47 42 C52 48 63 43 65 48 C68 52 65 63 62 69 C59 76 54 82 47 87 C40 93 31 97 23 100 C15 102 6 103 -2 103 C-10 102 -18 99 -26 97 C-34 94 -43 91 -50 87 C-57 84 -64 80 -69 75 C-73 70 -77 64 -78 57Z" fill="#c62a2e"/><path d="M-99 -13 C-97 -18 -93 -20 -90 -21 C-87 -21 -81 -22 -79 -18 C-77 -13 -80 -0 -79 8 C-78 17 -75 25 -75 33 C-74 41 -74 57 -78 57 C-81 57 -92 41 -96 33 C-100 25 -100 16 -101 8 C-101 1 -101 -8 -99 -13Z" fill="#e0382b"/><path d="M-56 -83 C-52 -88 -43 -94 -35 -97 C-27 -99 -16 -100 -8 -100 C1 -99 10 -96 17 -92 C24 -88 30 -81 35 -77 C39 -73 45 -73 44 -68 C43 -63 33 -53 29 -46 C24 -40 22 -33 17 -31 C11 -29 2 -36 -5 -36 C-12 -36 -19 -32 -26 -33 C-33 -33 -38 -35 -44 -37 C-50 -40 -59 -44 -62 -49 C-66 -55 -65 -62 -64 -68 C-63 -73 -61 -78 -56 -83Z" fill="#ee4933"/><path d="M44 -68 C44 -76 30 -88 35 -89 C39 -90 62 -79 71 -72 C81 -65 88 -56 93 -46 C97 -37 100 -26 100 -16 C101 -6 100 5 96 14 C92 24 84 33 77 39 C71 44 66 47 59 48 C52 49 42 47 35 45 C28 42 21 38 17 33 C12 28 7 22 7 14 C7 7 12 -1 17 -10 C21 -19 30 -28 35 -37 C39 -47 44 -59 44 -68Z" fill="#ee3b2e"/><path d="M47 -65 C52 -70 64 -71 71 -68 C79 -64 87 -52 91 -43 C95 -35 97 -23 97 -16 C97 -9 94 -4 90 -4 C85 -4 77 -15 71 -16 C65 -17 58 -6 53 -10 C49 -13 45 -28 44 -37 C43 -46 42 -60 47 -65Z" fill="#f05a42"/><path d="M-79 -37 C-76 -47 -68 -51 -62 -51 C-57 -51 -50 -40 -44 -37 C-38 -34 -28 -36 -26 -33 C-24 -29 -34 -21 -35 -16 C-36 -11 -37 -5 -32 -1 C-28 3 -16 10 -8 8 C0 7 12 -1 17 -10 C22 -19 18 -37 23 -46 C27 -56 40 -69 44 -68 C48 -66 49 -50 47 -37 C46 -25 42 -3 35 8 C27 20 15 26 1 33 C-12 40 -33 48 -44 49 C-56 51 -63 49 -69 42 C-74 35 -77 22 -79 8 C-81 -5 -82 -27 -79 -37Z" fill="#ec2c2d"/><path d="M-59 5 C-55 -0 -43 -3 -38 -4 C-33 -4 -31 -2 -31 2 C-30 6 -32 15 -35 21 C-38 26 -43 31 -47 33 C-52 34 -60 33 -62 28 C-65 24 -64 11 -59 5Z" fill="#b8283a" opacity="0.55"/><path d="M-75 33 C-74 30 -69 28 -62 28 C-56 28 -47 36 -35 33 C-23 29 -4 10 7 5 C19 1 36 1 35 5 C34 10 15 25 1 33 C-12 40 -33 48 -44 49 C-56 51 -62 46 -67 43 C-72 41 -75 35 -75 33Z" fill="#ef4530"/><circle cx="-11" cy="-14" r="25" fill="#6f6a3a"/><circle cx="-11" cy="-14" r="21" fill="#a89c62" stroke="#8a8048" stroke-width="4" stroke-dasharray="3 3"/><circle cx="-11" cy="-16" r="12" fill="#4a1a28"/><ellipse cx="-10" cy="-14" rx="9" ry="7" fill="#d98aa2"/><ellipse cx="-10" cy="-14" rx="4.5" ry="3.0" fill="#7a2a48"/></g>
<g id="pop2"><path d="M-8 -100 C4 -100 22 -97 35 -92 C48 -87 61 -80 71 -72 C81 -64 88 -55 93 -46 C98 -37 100 -26 100 -16 C100 -6 100 5 96 14 C92 23 83 33 78 39 C73 45 68 43 65 48 C62 53 65 62 62 69 C59 76 54 82 47 87 C40 92 31 97 23 99 C15 101 6 100 -2 100 C-10 100 -18 99 -26 97 C-34 95 -43 91 -50 87 C-57 83 -64 80 -69 75 C-74 70 -74 64 -78 57 C-82 50 -92 41 -96 33 C-100 25 -100 16 -100 8 C-100 0 -101 -8 -99 -13 C-97 -18 -93 -20 -90 -21 C-87 -22 -83 -16 -81 -19 C-79 -22 -80 -30 -79 -37 C-78 -44 -76 -51 -72 -59 C-68 -67 -62 -77 -56 -83 C-50 -89 -46 -92 -38 -95 C-30 -98 -20 -100 -8 -100Z" fill="#e8352c"/><path d="M-78 57 C-79 50 -80 34 -75 33 C-69 31 -57 49 -44 49 C-32 49 -12 39 1 33 C15 26 27 10 35 11 C42 13 42 36 47 42 C52 48 63 43 65 48 C68 52 65 63 62 69 C59 76 54 82 47 87 C40 93 31 97 23 100 C15 102 6 103 -2 103 C-10 102 -18 99 -26 97 C-34 94 -43 91 -50 87 C-57 84 -64 80 -69 75 C-73 70 -77 64 -78 57Z" fill="#c62a2e"/><path d="M-99 -13 C-97 -18 -93 -20 -90 -21 C-87 -21 -81 -22 -79 -18 C-77 -13 -80 -0 -79 8 C-78 17 -75 25 -75 33 C-74 41 -74 57 -78 57 C-81 57 -92 41 -96 33 C-100 25 -100 16 -101 8 C-101 1 -101 -8 -99 -13Z" fill="#e0382b"/><path d="M-56 -83 C-52 -88 -43 -94 -35 -97 C-27 -99 -16 -100 -8 -100 C1 -99 10 -96 17 -92 C24 -88 30 -81 35 -77 C39 -73 45 -73 44 -68 C43 -63 33 -53 29 -46 C24 -40 22 -33 17 -31 C11 -29 2 -36 -5 -36 C-12 -36 -19 -32 -26 -33 C-33 -33 -38 -35 -44 -37 C-50 -40 -59 -44 -62 -49 C-66 -55 -65 -62 -64 -68 C-63 -73 -61 -78 -56 -83Z" fill="#ee4933"/><path d="M44 -68 C44 -76 30 -88 35 -89 C39 -90 62 -79 71 -72 C81 -65 88 -56 93 -46 C97 -37 100 -26 100 -16 C101 -6 100 5 96 14 C92 24 84 33 77 39 C71 44 66 47 59 48 C52 49 42 47 35 45 C28 42 21 38 17 33 C12 28 7 22 7 14 C7 7 12 -1 17 -10 C21 -19 30 -28 35 -37 C39 -47 44 -59 44 -68Z" fill="#ee3b2e"/><path d="M47 -65 C52 -70 64 -71 71 -68 C79 -64 87 -52 91 -43 C95 -35 97 -23 97 -16 C97 -9 94 -4 90 -4 C85 -4 77 -15 71 -16 C65 -17 58 -6 53 -10 C49 -13 45 -28 44 -37 C43 -46 42 -60 47 -65Z" fill="#f05a42"/><path d="M-79 -37 C-76 -47 -68 -51 -62 -51 C-57 -51 -50 -40 -44 -37 C-38 -34 -28 -36 -26 -33 C-24 -29 -34 -21 -35 -16 C-36 -11 -37 -5 -32 -1 C-28 3 -16 10 -8 8 C0 7 12 -1 17 -10 C22 -19 18 -37 23 -46 C27 -56 40 -69 44 -68 C48 -66 49 -50 47 -37 C46 -25 42 -3 35 8 C27 20 15 26 1 33 C-12 40 -33 48 -44 49 C-56 51 -63 49 -69 42 C-74 35 -77 22 -79 8 C-81 -5 -82 -27 -79 -37Z" fill="#ec2c2d"/><path d="M-59 5 C-55 -0 -43 -3 -38 -4 C-33 -4 -31 -2 -31 2 C-30 6 -32 15 -35 21 C-38 26 -43 31 -47 33 C-52 34 -60 33 -62 28 C-65 24 -64 11 -59 5Z" fill="#b8283a" opacity="0.55"/><path d="M-75 33 C-74 30 -69 28 -62 28 C-56 28 -47 36 -35 33 C-23 29 -4 10 7 5 C19 1 36 1 35 5 C34 10 15 25 1 33 C-12 40 -33 48 -44 49 C-56 51 -62 46 -67 43 C-72 41 -75 35 -75 33Z" fill="#ef4530"/><circle cx="-11" cy="-14" r="22" fill="#6f6a3a"/><circle cx="-11" cy="-14" r="19" fill="#a89c62" stroke="#8a8048" stroke-width="4" stroke-dasharray="3 3"/><circle cx="-11" cy="-16" r="11" fill="#4a1a28"/><ellipse cx="-10" cy="-14" rx="8" ry="6" fill="#d98aa2"/><ellipse cx="-10" cy="-14" rx="4.0" ry="2.7" fill="#7a2a48"/></g>
<g id="pop3"><path d="M-8 -100 C4 -100 22 -97 35 -92 C48 -87 61 -80 71 -72 C81 -64 88 -55 93 -46 C98 -37 100 -26 100 -16 C100 -6 100 5 96 14 C92 23 83 33 78 39 C73 45 68 43 65 48 C62 53 65 62 62 69 C59 76 54 82 47 87 C40 92 31 97 23 99 C15 101 6 100 -2 100 C-10 100 -18 99 -26 97 C-34 95 -43 91 -50 87 C-57 83 -64 80 -69 75 C-74 70 -74 64 -78 57 C-82 50 -92 41 -96 33 C-100 25 -100 16 -100 8 C-100 0 -101 -8 -99 -13 C-97 -18 -93 -20 -90 -21 C-87 -22 -83 -16 -81 -19 C-79 -22 -80 -30 -79 -37 C-78 -44 -76 -51 -72 -59 C-68 -67 -62 -77 -56 -83 C-50 -89 -46 -92 -38 -95 C-30 -98 -20 -100 -8 -100Z" fill="#d73122"/><path d="M-78 57 C-79 50 -80 34 -75 33 C-69 31 -57 49 -44 49 C-32 49 -12 39 1 33 C15 26 27 10 35 11 C42 13 42 36 47 42 C52 48 63 43 65 48 C68 52 65 63 62 69 C59 76 54 82 47 87 C40 93 31 97 23 100 C15 102 6 103 -2 103 C-10 102 -18 99 -26 97 C-34 94 -43 91 -50 87 C-57 84 -64 80 -69 75 C-73 70 -77 64 -78 57Z" fill="#b8261f"/><path d="M-99 -13 C-97 -18 -93 -20 -90 -21 C-87 -21 -81 -22 -79 -18 C-77 -13 -80 -0 -79 8 C-78 17 -75 25 -75 33 C-74 41 -74 57 -78 57 C-81 57 -92 41 -96 33 C-100 25 -100 16 -101 8 C-101 1 -101 -8 -99 -13Z" fill="#cf3022"/><path d="M-56 -83 C-52 -88 -43 -94 -35 -97 C-27 -99 -16 -100 -8 -100 C1 -99 10 -96 17 -92 C24 -88 30 -81 35 -77 C39 -73 45 -73 44 -68 C43 -63 33 -53 29 -46 C24 -40 22 -33 17 -31 C11 -29 2 -36 -5 -36 C-12 -36 -19 -32 -26 -33 C-33 -33 -38 -35 -44 -37 C-50 -40 -59 -44 -62 -49 C-66 -55 -65 -62 -64 -68 C-63 -73 -61 -78 -56 -83Z" fill="#e04a30"/><path d="M44 -68 C44 -76 30 -88 35 -89 C39 -90 62 -79 71 -72 C81 -65 88 -56 93 -46 C97 -37 100 -26 100 -16 C101 -6 100 5 96 14 C92 24 84 33 77 39 C71 44 66 47 59 48 C52 49 42 47 35 45 C28 42 21 38 17 33 C12 28 7 22 7 14 C7 7 12 -1 17 -10 C21 -19 30 -28 35 -37 C39 -47 44 -59 44 -68Z" fill="#d93524"/><path d="M47 -65 C52 -70 64 -71 71 -68 C79 -64 87 -52 91 -43 C95 -35 97 -23 97 -16 C97 -9 94 -4 90 -4 C85 -4 77 -15 71 -16 C65 -17 58 -6 53 -10 C49 -13 45 -28 44 -37 C43 -46 42 -60 47 -65Z" fill="#e35a3e"/><path d="M-79 -37 C-76 -47 -68 -51 -62 -51 C-57 -51 -50 -40 -44 -37 C-38 -34 -28 -36 -26 -33 C-24 -29 -34 -21 -35 -16 C-36 -11 -37 -5 -32 -1 C-28 3 -16 10 -8 8 C0 7 12 -1 17 -10 C22 -19 18 -37 23 -46 C27 -56 40 -69 44 -68 C48 -66 49 -50 47 -37 C46 -25 42 -3 35 8 C27 20 15 26 1 33 C-12 40 -33 48 -44 49 C-56 51 -63 49 -69 42 C-74 35 -77 22 -79 8 C-81 -5 -82 -27 -79 -37Z" fill="#d42a20"/><path d="M-59 5 C-55 -0 -43 -3 -38 -4 C-33 -4 -31 -2 -31 2 C-30 6 -32 15 -35 21 C-38 26 -43 31 -47 33 C-52 34 -60 33 -62 28 C-65 24 -64 11 -59 5Z" fill="#a8222a" opacity="0.55"/><path d="M-75 33 C-74 30 -69 28 -62 28 C-56 28 -47 36 -35 33 C-23 29 -4 10 7 5 C19 1 36 1 35 5 C34 10 15 25 1 33 C-12 40 -33 48 -44 49 C-56 51 -62 46 -67 43 C-72 41 -75 35 -75 33Z" fill="#de452c"/><circle cx="-11" cy="-14" r="16" fill="#6a5f3a"/><circle cx="-11" cy="-14" r="12" fill="#9a8c5c"/><circle cx="-11" cy="-14" r="7" fill="#3a1218"/><circle cx="-11" cy="-14" r="4" fill="#b06a80"/></g>
<g id="grain" fill="none" stroke-width="0.8">
<path d="M0.500 0 L0.500 41 L20 41 L16 31 L21.500 21 Z M3.500 4 V41 M6.500 7 V41 M9.500 10 V41 M12.500 13 V41 M1 1 L19 41"/>
</g>
</defs><rect x="122.500" y="188.500" width="323" height="213" fill="#fff" stroke="#000" stroke-width="1"/><rect x="141" y="215.500" width="277" height="180.500" fill="#f9c4cd"/><g fill="none" stroke="#f5776e" stroke-width="1" shape-rendering="crispEdges"><rect x="143.500" y="217.500" width="272" height="176.500"/><path d="M143 246.500 H174 M143 248.500 H174 M385 246.500 H416 M385 248.500 H416 M143 362.500 H174 M143 364.500 H174 M385 362.500 H416 M385 364.500 H416"/></g><g fill="none" stroke="#9ab887" stroke-width="1" shape-rendering="crispEdges"><path d="M174.500 218 V394 M384.500 218 V394 M174 247.500 H385 M174 363.500 H385"/></g><use href="#pop" transform="translate(279.600,305.400) scale(0.366)"/><use href="#pop" transform="translate(205.700,305.500) scale(0.186)"/><use href="#pop" transform="translate(353.200,305.500) scale(0.186)"/><use href="#grain" transform="translate(270,304)" stroke="#6a9a9c"/><text x="423" y="207" font-family="Liberation Sans, sans-serif" font-weight="bold" font-size="15" fill="#000">1</text><rect x="460.500" y="188.500" width="393" height="300" fill="#fff"/><rect x="465.500" y="215.500" width="359.500" height="266.500" fill="#f69bac"/><g fill="none" stroke="#f2686f" stroke-width="1" shape-rendering="crispEdges"><rect x="467.500" y="217.500" width="356" height="263"/><path d="M540.500 218 V292 M542.500 218 V292 M748.500 218 V292 M750.500 218 V292 M540.500 405 V480 M542.500 405 V480 M748.500 405 V480 M750.500 405 V480"/></g><g fill="none" stroke="#c9a784" stroke-width="1" shape-rendering="crispEdges"><path d="M468 292.500 H823 M468 404.500 H823 M541.500 292 V405 M749.500 292 V405"/></g><use href="#grain" transform="translate(634.500,345.500)" stroke="#74848e"/><rect x="122.500" y="507.500" width="323" height="213" fill="#fff"/><use href="#pop2" transform="translate(194.1,552.5) rotate(235) scale(0.186)"/><use href="#pop2" transform="translate(240.3,558.4) rotate(87) scale(0.186)"/><use href="#pop2" transform="translate(285.1,553.8) rotate(-13) scale(0.186)"/><use href="#pop2" transform="translate(329.4,557.6) rotate(36) scale(0.186)"/><use href="#pop2" transform="translate(373.0,551.2) rotate(14) scale(0.186)"/><use href="#pop2" transform="translate(160.1,581.5) rotate(126) scale(0.186)"/><use href="#pop2" transform="translate(199.3,589.7) rotate(38) scale(0.186)"/><use href="#pop2" transform="translate(265.4,588.4) rotate(257) scale(0.186)"/><use href="#pop2" transform="translate(305.1,588.4) rotate(127) scale(0.186)"/><use href="#pop2" transform="translate(360.2,591.7) rotate(256) scale(0.186)"/><use href="#pop2" transform="translate(399.9,585.8) rotate(55) scale(0.186)"/><use href="#pop2" transform="translate(167.2,619.9) rotate(145) scale(0.186)"/><use href="#pop2" transform="translate(230.5,617.3) rotate(3) scale(0.186)"/><use href="#pop2" transform="translate(282.5,622.5) rotate(256) scale(0.186)"/><use href="#pop2" transform="translate(331.7,619.9) rotate(126) scale(0.186)"/><use href="#pop2" transform="translate(393.5,628.1) rotate(84) scale(0.186)"/><use href="#pop2" transform="translate(162.9,660.1) rotate(259) scale(0.186)"/><use href="#pop2" transform="translate(208.7,653.0) rotate(43) scale(0.186)"/><use href="#pop2" transform="translate(251.3,649.9) rotate(182) scale(0.186)"/><use href="#pop2" transform="translate(298.4,657.6) rotate(78) scale(0.186)"/><use href="#pop2" transform="translate(354.8,656.3) rotate(136) scale(0.186)"/><use href="#pop2" transform="translate(397.8,667.8) rotate(42) scale(0.186)"/><use href="#pop2" transform="translate(192.9,693.4) rotate(43) scale(0.186)"/><use href="#pop2" transform="translate(235.9,684.5) rotate(4) scale(0.186)"/><use href="#pop2" transform="translate(281.3,694.2) rotate(140) scale(0.186)"/><use href="#pop2" transform="translate(324.0,688.3) rotate(279) scale(0.186)"/><use href="#pop2" transform="translate(365.0,693.4) rotate(219) scale(0.186)"/><g fill="none" stroke="#ef8a72" stroke-width="1" shape-rendering="crispEdges"><rect x="143.500" y="536.500" width="272" height="176"/><path d="M143 565.500 H174 M143 567.500 H174 M385 565.500 H416 M385 567.500 H416 M143 681.500 H174 M143 683.500 H174 M385 681.500 H416 M385 683.500 H416"/></g><g fill="none" stroke="#a8c890" stroke-width="1" shape-rendering="crispEdges"><path d="M174.500 537 V712 M384.500 537 V712 M174 566.500 H385 M174 682.500 H385"/></g><use href="#grain" transform="translate(270,623)" stroke="#6a9a9c"/><rect x="460.500" y="502.500" width="393" height="300" fill="#fff"/><rect x="465" y="529.500" width="360.500" height="267.500" fill="#d12b2b"/><g fill="none" stroke="#dc2f30" stroke-width="1" shape-rendering="crispEdges"><path d="M541.500 530 V797 M748.500 530 V797"/></g><g fill="none" stroke="#b5743c" stroke-width="1" shape-rendering="crispEdges"><path d="M466 607.500 H541.500 V606.500 M541.500 605.500 H748.500 M748.500 607.500 H824 M466 718.500 H541.500 M541.500 720.500 H748.500 M748.500 718.500 H824 M541.500 606 V720 M748.500 606 V720"/></g><use href="#grain" transform="translate(635,659.500)" stroke="#9a7f7c"/></svg>

<!-- DOCK1 -->
<div class="a" style="left:898px;top:68px;width:271px;height:825px;background:#3c3c3c"></div>
<div class="a dk" style="left:899px;top:69px;width:269px;height:11px"></div>
<svg style="left:1154px;top:72px" width="8" height="5"><path d="M0.800 0.300 L3.200 2.500 L0.800 4.700 M4.600 0.300 L7 2.500 L4.600 4.700" fill="none" stroke="#d0d0d0" stroke-width="1.300"/></svg>
<div class="a dk" style="left:899px;top:81px;width:269px;height:27px"></div>
<div class="a pb" style="left:899px;top:107px;width:269px;height:243px"></div>
<div class="a pb" style="left:899px;top:81px;width:64px;height:27px"></div>
<div class="t b" style="left:908px;top:90px;font-size:10px;letter-spacing:-0.27px;color:#f0f0f0">Artboards</div>
<svg style="left:1152px;top:91px" width="11" height="8"><path d="M0 0.500H10M0 2.500H10M0 4.500H10M0 6.500H10" stroke="#bdbdbd" stroke-width="1" shape-rendering="crispEdges"/></svg>
<div class="a" style="left:904px;top:114px;width:259px;height:216px;border:1px solid #494949;border-radius:2px"></div>
<div class="a" style="left:905px;top:115px;width:257px;height:18px;background:#4d637f"></div>
<div class="a" style="left:905px;top:133px;width:257px;height:1px;background:#494949"></div>
<div class="a" style="left:935px;top:115px;width:1px;height:18px;background:#494949"></div>
<div class="a" style="left:1121px;top:115px;width:1px;height:18px;background:#494949"></div>
<div class="t" style="left:909px;top:119px;font-size:12px;color:#f0f0f0">1</div>
<div class="t" style="left:941px;top:120px;font-size:10.500px;letter-spacing:-0.42px;color:#f0f0f0">FEFCO 0306 Lid.front.3 Poppies</div>
<svg style="left:1128px;top:116px" width="15" height="13"><path d="M3.500 0 V3 M0 2.500 H2.500" stroke="#d8d8d8" stroke-width="1" fill="none"/><path d="M3.500 3.500 H10.500 L13.500 6.500 V11.500 H3.500Z" fill="#66788f" stroke="#d8d8d8" stroke-width="1.200"/></svg>
<div class="a" style="left:905px;top:152px;width:257px;height:1px;background:#494949"></div>
<div class="a" style="left:935px;top:134px;width:1px;height:18px;background:#494949"></div>
<div class="a" style="left:1121px;top:134px;width:1px;height:18px;background:#494949"></div>
<div class="t" style="left:909px;top:138px;font-size:12px;color:#f0f0f0">2</div>
<div class="t" style="left:941px;top:139px;font-size:10.500px;letter-spacing:-0.42px;color:#f0f0f0">FEFCO 0306 Body.front.Pink</div>
<svg style="left:1128px;top:135px" width="15" height="13"><path d="M3.500 0 V3 M0 2.500 H2.500" stroke="#d8d8d8" stroke-width="1" fill="none"/><path d="M3.500 3.500 H10.500 L13.500 6.500 V11.500 H3.500Z" fill="#6a6a6a" stroke="#d8d8d8" stroke-width="1.200"/></svg>
<div class="a" style="left:905px;top:171px;width:257px;height:1px;background:#494949"></div>
<div class="a" style="left:935px;top:153px;width:1px;height:18px;background:#494949"></div>
<div class="a" style="left:1121px;top:153px;width:1px;height:18px;background:#494949"></div>
<div class="t" style="left:909px;top:157px;font-size:12px;color:#f0f0f0">3</div>
<div class="t" style="left:941px;top:158px;font-size:10.500px;letter-spacing:-0.42px;color:#f0f0f0">FEFCO 0306 Body.front.Red</div>
<svg style="left:1128px;top:154px" width="15" height="13"><path d="M3.500 0 V3 M0 2.500 H2.500" stroke="#d8d8d8" stroke-width="1" fill="none"/><path d="M3.500 3.500 H10.500 L13.500 6.500 V11.500 H3.500Z" fill="#6a6a6a" stroke="#d8d8d8" stroke-width="1.200"/></svg>
<div class="a" style="left:905px;top:190px;width:257px;height:1px;background:#494949"></div>
<div class="a" style="left:935px;top:172px;width:1px;height:18px;background:#494949"></div>
<div class="a" style="left:1121px;top:172px;width:1px;height:18px;background:#494949"></div>
<div class="t" style="left:909px;top:176px;font-size:12px;color:#f0f0f0">4</div>
<div class="t" style="left:941px;top:177px;font-size:10.500px;letter-spacing:-0.42px;color:#f0f0f0">FEFCO 0306 Lid.front.Poppies</div>
<svg style="left:1128px;top:173px" width="15" height="13"><path d="M3.500 0 V3 M0 2.500 H2.500" stroke="#d8d8d8" stroke-width="1" fill="none"/><path d="M3.500 3.500 H10.500 L13.500 6.500 V11.500 H3.500Z" fill="#6a6a6a" stroke="#d8d8d8" stroke-width="1.200"/></svg>
<div class="t b" style="left:1098px;top:113px;font-size:16px;color:#fff">2</div>
<div class="t" style="left:904px;top:335px;font-size:10.500px;letter-spacing:-0.42px;color:#c8c8c8">4 Artboards</div>
<svg style="left:1051px;top:334px" width="11" height="11"><path d="M5.500 0.500 L10.500 5.500 H7.500 V10.500 H3.500 V5.500 H0.500Z" fill="#6e6e6e"/></svg>
<svg style="left:1077px;top:334px" width="11" height="11"><path d="M5.500 10.500 L10.500 5.500 H7.500 V0.500 H3.500 V5.500 H0.500Z" fill="#c9c9c9"/></svg>
<svg style="left:1103px;top:334px" width="11" height="11"><path d="M0 0 H10.500 V10.500 H4 V4 H0Z" fill="#c9c9c9"/><path d="M0.500 5.500 L3 5.500 L3 8" fill="none" stroke="#c9c9c9" stroke-width="1"/></svg>
<svg style="left:1129px;top:334px" width="11" height="12"><path d="M0.500 2.500 H10.500 M3.500 2.500 V0.800 H7.500 V2.500 M1.500 3 L2 11.500 H9 L9.500 3 M4 4.500 V10 M5.500 4.500 V10 M7 4.500 V10" fill="none" stroke="#c9c9c9" stroke-width="1"/></svg>
<div class="a dk" style="left:899px;top:352px;width:269px;height:27px"></div>
<div class="a pb" style="left:899px;top:378px;width:269px;height:268px"></div>
<div class="a pb" style="left:899px;top:352px;width:46px;height:27px"></div>
<div class="t b" style="left:908px;top:361px;font-size:10px;letter-spacing:-0.27px;color:#f0f0f0">Layers</div>
<svg style="left:1152px;top:362px" width="11" height="8"><path d="M0 0.500H10M0 2.500H10M0 4.500H10M0 6.500H10" stroke="#bdbdbd" stroke-width="1" shape-rendering="crispEdges"/></svg>
<div class="a" style="left:904px;top:385px;width:259px;height:243px;border:1px solid #494949;border-radius:2px"></div>
<div class="a" style="left:905px;top:406px;width:257px;height:1px;background:#494949"></div>
<div class="a" style="left:925px;top:386px;width:1px;height:20px;background:#494949"></div>
<div class="a" style="left:1126px;top:386px;width:1px;height:20px;background:#494949"></div>
<svg style="left:908px;top:391px" width="13" height="9"><path d="M0.500 4.500 C3 0.500 10 0.500 12.500 4.500 C10 8.500 3 8.500 0.500 4.500Z" fill="none" stroke="#c9c9c9" stroke-width="1.200"/><circle cx="6.500" cy="4.300" r="2.300" fill="#c9c9c9"/></svg>
<svg style="left:932px;top:391px" width="9" height="11"><rect x="0.500" y="4.500" width="8" height="6" fill="#c9c9c9"/><path d="M2.300 4.500 V3 A2.200 2.200 0 0 1 6.700 3 V4.500" fill="none" stroke="#c9c9c9" stroke-width="1.300"/></svg>
<div class="a" style="left:948px;top:386px;width:3px;height:19px;background:#e8484a"></div>
<svg style="left:958px;top:391px" width="7" height="10"><path class="chev" d="M1.500 0.800 L5 4.800 L1.500 8.800" style="stroke-width:1.500"/></svg>
<div class="a" style="left:977px;top:387px;width:18px;height:18px;background:#fff;border:1px solid #000"></div>
<svg style="left:978px;top:390px" width="16" height="14"><g fill="none" stroke="#e66" stroke-width="0.800"><rect x="1" y="1" width="6" height="4"/><rect x="9" y="1" width="6" height="5"/><rect x="1" y="8" width="6" height="4"/><rect x="9" y="8" width="6" height="5"/></g><g stroke="#5a5" stroke-width="0.800"><path d="M3 1 V5 M5 8 V12 M11 1 V6 M13 8 V13 M9 3.500 H15 M1 10 H7"/></g></svg>
<div class="t" style="left:1000px;top:392px;font-size:10.500px;letter-spacing:-0.42px;color:#f0f0f0">EVDrawing</div>
<svg style="left:1132px;top:391px" width="10" height="10"><circle cx="5" cy="5" r="3.700" fill="none" stroke="#d0d0d0" stroke-width="1.100"/></svg>
<div class="a" style="left:905px;top:427px;width:257px;height:1px;background:#494949"></div>
<div class="a" style="left:925px;top:407px;width:1px;height:20px;background:#494949"></div>
<div class="a" style="left:1126px;top:407px;width:1px;height:20px;background:#494949"></div>
<svg style="left:908px;top:412px" width="13" height="9"><path d="M0.500 4.500 C3 0.500 10 0.500 12.500 4.500 C10 8.500 3 8.500 0.500 4.500Z" fill="none" stroke="#c9c9c9" stroke-width="1.200"/><circle cx="6.500" cy="4.300" r="2.300" fill="#c9c9c9"/></svg>
<div class="a" style="left:948px;top:407px;width:3px;height:19px;background:#4f7fff"></div>
<svg style="left:958px;top:412px" width="7" height="10"><path class="chev" d="M1.500 0.800 L5 4.800 L1.500 8.800" style="stroke-width:1.500"/></svg>
<div class="a" style="left:977px;top:408px;width:18px;height:18px;background:#fff;border:1px solid #000"></div>
<svg style="left:978px;top:411px" width="16" height="12"><circle cx="1.8" cy="1.6" r="1.700" fill="#dd382c"/><circle cx="4.9" cy="1.6" r="1.700" fill="#dd382c"/><circle cx="8.0" cy="1.6" r="1.700" fill="#dd382c"/><circle cx="11.1" cy="1.6" r="1.700" fill="#dd382c"/><circle cx="14.2" cy="1.6" r="1.700" fill="#dd382c"/><circle cx="2.6" cy="4.5" r="1.700" fill="#dd382c"/><circle cx="5.7" cy="4.5" r="1.700" fill="#dd382c"/><circle cx="8.8" cy="4.5" r="1.700" fill="#dd382c"/><circle cx="11.9" cy="4.5" r="1.700" fill="#dd382c"/><circle cx="15.0" cy="4.5" r="1.700" fill="#dd382c"/><circle cx="1.8" cy="7.4" r="1.700" fill="#dd382c"/><circle cx="4.9" cy="7.4" r="1.700" fill="#dd382c"/><circle cx="8.0" cy="7.4" r="1.700" fill="#dd382c"/><circle cx="11.1" cy="7.4" r="1.700" fill="#dd382c"/><circle cx="14.2" cy="7.4" r="1.700" fill="#dd382c"/><circle cx="2.6" cy="10.3" r="1.700" fill="#dd382c"/><circle cx="5.7" cy="10.3" r="1.700" fill="#dd382c"/><circle cx="8.8" cy="10.3" r="1.700" fill="#dd382c"/><circle cx="11.9" cy="10.3" r="1.700" fill="#dd382c"/><circle cx="15.0" cy="10.3" r="1.700" fill="#dd382c"/></svg>
<div class="t" style="left:1000px;top:413px;font-size:10.500px;letter-spacing:-0.42px;color:#f0f0f0">Poppies</div>
<svg style="left:1132px;top:412px" width="10" height="10"><circle cx="5" cy="5" r="3.700" fill="none" stroke="#d0d0d0" stroke-width="1.100"/></svg>
<div class="a" style="left:905px;top:448px;width:257px;height:1px;background:#494949"></div>
<div class="a" style="left:925px;top:428px;width:1px;height:20px;background:#494949"></div>
<div class="a" style="left:1126px;top:428px;width:1px;height:20px;background:#494949"></div>
<svg style="left:908px;top:433px" width="13" height="9"><path d="M0.500 4.500 C3 0.500 10 0.500 12.500 4.500 C10 8.500 3 8.500 0.500 4.500Z" fill="none" stroke="#c9c9c9" stroke-width="1.200"/><circle cx="6.500" cy="4.300" r="2.300" fill="#c9c9c9"/></svg>
<div class="a" style="left:948px;top:428px;width:3px;height:19px;background:#c79a68"></div>
<svg style="left:958px;top:433px" width="7" height="10"><path class="chev" d="M1.500 0.800 L5 4.800 L1.500 8.800" style="stroke-width:1.500"/></svg>
<div class="a" style="left:977px;top:429px;width:18px;height:18px;background:#fff;border:1px solid #000"></div>
<div class="a" style="left:978px;top:432px;width:16px;height:12px;background:#d12b2b"></div>
<div class="t" style="left:1000px;top:434px;font-size:10.500px;letter-spacing:-0.42px;color:#f0f0f0">Body 2</div>
<svg style="left:1132px;top:433px" width="10" height="10"><circle cx="5" cy="5" r="3.700" fill="none" stroke="#d0d0d0" stroke-width="1.100"/></svg>
<div class="a" style="left:905px;top:449px;width:257px;height:20px;background:#4d637f"></div>
<svg style="left:1156px;top:449px" width="6" height="6"><path d="M0 0 H6 V6Z" fill="#e8e8e8"/></svg>
<div class="a" style="left:905px;top:469px;width:257px;height:1px;background:#494949"></div>
<div class="a" style="left:925px;top:449px;width:1px;height:20px;background:#494949"></div>
<div class="a" style="left:1126px;top:449px;width:1px;height:20px;background:#494949"></div>
<svg style="left:908px;top:454px" width="13" height="9"><path d="M0.500 4.500 C3 0.500 10 0.500 12.500 4.500 C10 8.500 3 8.500 0.500 4.500Z" fill="none" stroke="#c9c9c9" stroke-width="1.200"/><circle cx="6.500" cy="4.300" r="2.300" fill="#c9c9c9"/></svg>
<div class="a" style="left:948px;top:449px;width:3px;height:19px;background:#8c2f10"></div>
<svg style="left:958px;top:454px" width="7" height="10"><path class="chev" d="M1.500 0.800 L5 4.800 L1.500 8.800" style="stroke-width:1.500"/></svg>
<div class="a" style="left:977px;top:450px;width:18px;height:18px;background:#fff;border:1px solid #000"></div>
<div class="a" style="left:978px;top:454px;width:16px;height:10px;background:#f9c4cd"></div>
<svg style="left:978px;top:454px" width="16" height="10"><circle cx="8" cy="5" r="2.600" fill="#e0362c"/><circle cx="3.500" cy="5" r="1.500" fill="#e0362c"/><circle cx="12.500" cy="5" r="1.500" fill="#e0362c"/></svg>
<div class="t" style="left:1000px;top:455px;font-size:10.500px;letter-spacing:-0.42px;color:#f0f0f0">Lid 1</div>
<svg style="left:1132px;top:454px" width="10" height="10"><circle cx="5" cy="5" r="3.700" fill="none" stroke="#d0d0d0" stroke-width="1.100"/></svg>
<div class="a" style="left:905px;top:490px;width:257px;height:1px;background:#494949"></div>
<div class="a" style="left:925px;top:470px;width:1px;height:20px;background:#494949"></div>
<div class="a" style="left:1126px;top:470px;width:1px;height:20px;background:#494949"></div>
<svg style="left:908px;top:475px" width="13" height="9"><path d="M0.500 4.500 C3 0.500 10 0.500 12.500 4.500 C10 8.500 3 8.500 0.500 4.500Z" fill="none" stroke="#c9c9c9" stroke-width="1.200"/><circle cx="6.500" cy="4.300" r="2.300" fill="#c9c9c9"/></svg>
<div class="a" style="left:948px;top:470px;width:3px;height:19px;background:#4f7fff"></div>
<svg style="left:958px;top:475px" width="7" height="10"><path class="chev" d="M1.500 0.800 L5 4.800 L1.500 8.800" style="stroke-width:1.500"/></svg>
<div class="a" style="left:977px;top:471px;width:18px;height:18px;background:#fff;border:1px solid #000"></div>
<div class="a" style="left:978px;top:474px;width:16px;height:12px;background:#f69bac"></div>
<div class="t" style="left:1000px;top:476px;font-size:10.500px;letter-spacing:-0.42px;color:#f0f0f0">Body 1</div>
<svg style="left:1132px;top:475px" width="10" height="10"><circle cx="5" cy="5" r="3.700" fill="none" stroke="#d0d0d0" stroke-width="1.100"/></svg>
<div class="t" style="left:904px;top:632px;font-size:10.500px;letter-spacing:-0.42px;color:#c8c8c8">5 Layers</div>
<svg style="left:1025px;top:631px" width="12" height="12"><circle cx="7" cy="4.500" r="3.700" fill="none" stroke="#707070" stroke-width="1.300"/><path d="M4.300 7.500 L0.800 11" stroke="#707070" stroke-width="1.600"/></svg>
<svg style="left:1051px;top:631px" width="12" height="12"><rect x="0.600" y="0.600" width="7" height="7" fill="none" stroke="#c9c9c9" stroke-width="1.200"/><rect x="3.500" y="3.500" width="7.500" height="7.500" fill="#c9c9c9"/><rect x="5" y="5" width="4.500" height="4.500" fill="#535353"/></svg>
<svg style="left:1075px;top:631px" width="15" height="12"><path d="M0.500 0.500 V5.500 H4 M2 3.500 L4.500 5.500 L2 7.500" fill="none" stroke="#c9c9c9" stroke-width="1.100"/><path d="M5 2 H14.500 V11 H9 V7 H5Z" fill="#c9c9c9"/></svg>
<svg style="left:1103px;top:631px" width="11" height="11"><path d="M0 0 H10.500 V10.500 H4 V4 H0Z" fill="#c9c9c9"/><path d="M0.500 5.500 L3 5.500 L3 8" fill="none" stroke="#c9c9c9" stroke-width="1"/></svg>
<svg style="left:1129px;top:631px" width="11" height="12"><path d="M0.500 2.500 H10.500 M3.500 2.500 V0.800 H7.500 V2.500 M1.500 3 L2 11.500 H9 L9.500 3 M4 4.500 V10 M5.500 4.500 V10 M7 4.500 V10" fill="none" stroke="#c9c9c9" stroke-width="1"/></svg>
<div class="a dk" style="left:899px;top:648px;width:269px;height:27px"></div>
<div class="a pb" style="left:899px;top:674px;width:269px;height:219px"></div>
<div class="a pb" style="left:899px;top:648px;width:62px;height:27px"></div>
<div class="t b" style="left:908px;top:657px;font-size:10px;letter-spacing:-0.27px;color:#f0f0f0">Swatches</div>
<svg style="left:1152px;top:658px" width="11" height="8"><path d="M0 0.500H10M0 2.500H10M0 4.500H10M0 6.500H10" stroke="#bdbdbd" stroke-width="1" shape-rendering="crispEdges"/></svg>
<div class="a" style="left:914px;top:692px;width:20px;height:20px;background:#fff;border:1px solid #222"></div>
<div class="a" style="left:919px;top:697px;width:10px;height:10px;background:#535353;border:1px solid #222"></div>
<svg style="left:914px;top:692px" width="20" height="20"><path d="M1 19 L19 1" stroke="#f00" stroke-width="1.800"/></svg>
<div class="a" style="left:904px;top:682px;width:20px;height:20px;background:#f9c6cf;border:1px solid #3a3a3a;box-shadow:inset 0 0 0 1px #e6e6e6"></div>
<div class="a" style="left:1114px;top:683px;width:48px;height:23px;border:1px solid #5e5e5e;border-radius:3px"></div>
<div class="a" style="left:1115px;top:684px;width:23px;height:21px;background:#333;border-radius:2px 0 0 2px"></div>
<svg style="left:1120px;top:688px" width="12" height="13"><path d="M0 1 H12 M0 4.500 H12 M0 8 H12 M0 11.500 H12" stroke="#e4e4e4" stroke-width="1.600"/></svg>
<svg style="left:1144px;top:688px" width="13" height="13"><g fill="#d8d8d8"><rect x="0" y="0" width="3.500" height="3.500"/><rect x="4" y="0" width="3.500" height="3.500"/><rect x="9" y="0" width="3.500" height="3.500"/><rect x="0" y="4" width="3.500" height="3.500"/><rect x="4" y="4" width="3.500" height="3.500"/><rect x="9" y="4" width="3.500" height="3.500"/><rect x="0" y="9" width="3.500" height="3.500"/><rect x="4" y="9" width="3.500" height="3.500"/><rect x="9" y="9" width="3.500" height="3.500"/></g></svg>
<div class="a" style="left:904px;top:717px;width:258px;height:156px;border:1px solid #494949;border-radius:2px"></div>
<div class="a" style="left:905px;top:737px;width:245px;height:1px;background:#494949"></div>
<div class="a" style="left:928px;top:721px;width:15px;height:15px;background:#fff;border:1px solid #2a2a2a"></div>
<svg style="left:928px;top:721px" width="15" height="15"><path d="M1 14 L14 1" stroke="#f00" stroke-width="1.600"/></svg>
<div class="t" style="left:949px;top:723px;font-size:10.500px;letter-spacing:-0.42px;color:#f0f0f0">[None]</div>
<svg style="left:1134px;top:722px" width="11" height="11"><rect x="1.500" y="2.500" width="8" height="7" fill="none" stroke="#d0d0d0" stroke-width="1.200"/><path d="M0.500 0.500 L10.500 10.500" stroke="#d0d0d0" stroke-width="1.300"/></svg>
<div class="a" style="left:905px;top:757px;width:245px;height:1px;background:#494949"></div>
<div class="a" style="left:928px;top:741px;width:15px;height:15px;background:#000;border:1px solid #2a2a2a"></div>
<div class="t" style="left:949px;top:743px;font-size:10.500px;letter-spacing:-0.42px;color:#f0f0f0">[Registration]</div>
<svg style="left:1134px;top:742px" width="11" height="11"><rect x="0.600" y="0.600" width="9.800" height="9.800" fill="none" stroke="#d0d0d0" stroke-width="1"/><circle cx="5.500" cy="5.500" r="2.600" fill="none" stroke="#d0d0d0" stroke-width="1"/><path d="M5.500 1 V10 M1 5.500 H10" stroke="#d0d0d0" stroke-width="0.900"/></svg>
<div class="a" style="left:905px;top:777px;width:245px;height:1px;background:#494949"></div>
<div class="a" style="left:928px;top:761px;width:15px;height:15px;background:#ff0000;border:1px solid #2a2a2a"></div>
<svg style="left:934px;top:767px" width="8" height="8"><path d="M8 0 V8 H0Z" fill="#fff"/><circle cx="5.800" cy="5.800" r="1.100" fill="#000"/></svg>
<div class="t" style="left:949px;top:763px;font-size:10.500px;letter-spacing:-0.42px;color:#f0f0f0">Cutting</div>
<svg style="left:1113px;top:762px" width="11" height="11"><rect x="0" y="0" width="11" height="11" fill="#c6c6c6"/><circle cx="5.500" cy="5.500" r="2" fill="#3a3a3a"/></svg>
<svg style="left:1134px;top:762px" width="11" height="11"><rect x="0" y="0" width="11" height="11" fill="#e8e8e8"/><rect x="1" y="1" width="3" height="9" fill="#e03030"/><rect x="4" y="1" width="3" height="9" fill="#30b040"/><rect x="7" y="1" width="3" height="9" fill="#3060e0"/></svg>
<div class="a" style="left:905px;top:797px;width:245px;height:1px;background:#494949"></div>
<div class="a" style="left:928px;top:781px;width:15px;height:15px;background:#00ff00;border:1px solid #2a2a2a"></div>
<svg style="left:934px;top:787px" width="8" height="8"><path d="M8 0 V8 H0Z" fill="#fff"/><circle cx="5.800" cy="5.800" r="1.100" fill="#000"/></svg>
<div class="t" style="left:949px;top:783px;font-size:10.500px;letter-spacing:-0.42px;color:#f0f0f0">Creasing</div>
<svg style="left:1113px;top:782px" width="11" height="11"><rect x="0" y="0" width="11" height="11" fill="#c6c6c6"/><circle cx="5.500" cy="5.500" r="2" fill="#3a3a3a"/></svg>
<svg style="left:1134px;top:782px" width="11" height="11"><rect x="0" y="0" width="11" height="11" fill="#e8e8e8"/><rect x="1" y="1" width="3" height="9" fill="#e03030"/><rect x="4" y="1" width="3" height="9" fill="#30b040"/><rect x="7" y="1" width="3" height="9" fill="#3060e0"/></svg>
<div class="a" style="left:905px;top:817px;width:245px;height:1px;background:#494949"></div>
<div class="a" style="left:928px;top:801px;width:15px;height:15px;background:#408080;border:1px solid #2a2a2a"></div>
<svg style="left:934px;top:807px" width="8" height="8"><path d="M8 0 V8 H0Z" fill="#fff"/><circle cx="5.800" cy="5.800" r="1.100" fill="#000"/></svg>
<div class="t" style="left:949px;top:803px;font-size:10.500px;letter-spacing:-0.42px;color:#f0f0f0">Default</div>
<svg style="left:1113px;top:802px" width="11" height="11"><rect x="0" y="0" width="11" height="11" fill="#c6c6c6"/><circle cx="5.500" cy="5.500" r="2" fill="#3a3a3a"/></svg>
<svg style="left:1134px;top:802px" width="11" height="11"><rect x="0" y="0" width="11" height="11" fill="#e8e8e8"/><rect x="1" y="1" width="3" height="9" fill="#e03030"/><rect x="4" y="1" width="3" height="9" fill="#30b040"/><rect x="7" y="1" width="3" height="9" fill="#3060e0"/></svg>
<div class="a" style="left:905px;top:837px;width:245px;height:1px;background:#494949"></div>
<div class="a" style="left:928px;top:821px;width:15px;height:15px;background:#800080;border:1px solid #2a2a2a"></div>
<svg style="left:934px;top:827px" width="8" height="8"><path d="M8 0 V8 H0Z" fill="#fff"/><circle cx="5.800" cy="5.800" r="1.100" fill="#000"/></svg>
<div class="t" style="left:949px;top:823px;font-size:10.500px;letter-spacing:-0.42px;color:#f0f0f0">Dimensions</div>
<svg style="left:1113px;top:822px" width="11" height="11"><rect x="0" y="0" width="11" height="11" fill="#c6c6c6"/><circle cx="5.500" cy="5.500" r="2" fill="#3a3a3a"/></svg>
<svg style="left:1134px;top:822px" width="11" height="11"><rect x="0" y="0" width="11" height="11" fill="#e8e8e8"/><rect x="1" y="1" width="3" height="9" fill="#e03030"/><rect x="4" y="1" width="3" height="9" fill="#30b040"/><rect x="7" y="1" width="3" height="9" fill="#3060e0"/></svg>
<div class="a" style="left:905px;top:857px;width:245px;height:1px;background:#494949"></div>
<div class="a" style="left:928px;top:841px;width:15px;height:15px;background:#64843a;border:1px solid #2a2a2a"></div>
<svg style="left:934px;top:847px" width="8" height="8"><path d="M8 0 V8 H0Z" fill="#fff"/></svg>
<div class="t" style="left:949px;top:843px;font-size:10.500px;letter-spacing:-0.42px;color:#f0f0f0">R=100 G=132 B=57</div>
<svg style="left:1113px;top:842px" width="11" height="11"><rect x="0" y="0" width="11" height="11" fill="#8c8c8c"/><path d="M0 2.500H11M0 5.500H11M0 8.500H11M2.500 0V11M5.500 0V11M8.500 0V11" stroke="#6c6c6c" stroke-width="0.700"/></svg>
<svg style="left:1134px;top:842px" width="11" height="11"><rect x="0" y="0" width="11" height="11" fill="#fff"/><path d="M0 0 H11 L5.500 5.500Z" fill="#ff20e0"/><path d="M0 0 V11 L5.500 5.500Z" fill="#20d0ff"/><path d="M11 0 V11 L5.500 5.500Z" fill="#fff000"/><path d="M0 11 H11 L5.500 5.500Z" fill="#000"/></svg>
<div class="a" style="left:928px;top:861px;width:15px;height:15px;background:#c8292f;border:1px solid #2a2a2a"></div>
<svg style="left:934px;top:867px" width="8" height="8"><path d="M8 0 V8 H0Z" fill="#fff"/></svg>
<div class="t" style="left:949px;top:863px;font-size:10.500px;letter-spacing:-0.42px;color:#f0f0f0">C=16 M=96 Y=92 K=6</div>
<svg style="left:1113px;top:862px" width="11" height="11"><rect x="0" y="0" width="11" height="11" fill="#8c8c8c"/><path d="M0 2.500H11M0 5.500H11M0 8.500H11M2.500 0V11M5.500 0V11M8.500 0V11" stroke="#6c6c6c" stroke-width="0.700"/></svg>
<svg style="left:1134px;top:862px" width="11" height="11"><rect x="0" y="0" width="11" height="11" fill="#fff"/><path d="M0 0 H11 L5.500 5.500Z" fill="#ff20e0"/><path d="M0 0 V11 L5.500 5.500Z" fill="#20d0ff"/><path d="M11 0 V11 L5.500 5.500Z" fill="#fff000"/><path d="M0 11 H11 L5.500 5.500Z" fill="#000"/></svg>
<div class="a" style="left:1150px;top:718px;width:12px;height:154px;background:#505050"></div>
<div class="a" style="left:1152px;top:730px;width:8px;height:113px;background:#696969;border-radius:4px"></div>
<svg style="left:1151px;top:721px" width="10" height="6"><path class="chev" d="M1 5 L5 1 L9 5" style="stroke:#b8b8b8;stroke-width:1.300"/></svg>
<svg style="left:1151px;top:864px" width="10" height="6"><path class="chev" d="M1 1 L5 5 L9 1" style="stroke:#b8b8b8;stroke-width:1.300"/></svg>
<div class="a pb" style="left:900px;top:873px;width:266px;height:4px"></div>
<div class="a" style="left:906px;top:872px;width:254px;height:1px;background:#494949"></div>
<svg style="left:909px;top:877px" width="16" height="12"><path d="M1 1 V10 M3.500 1 V10 M6 1 V10" stroke="#c9c9c9" stroke-width="1.400"/><path d="M8 1.500 L11.500 10" stroke="#c9c9c9" stroke-width="1.400"/><path d="M12 9 h3 l-1.500 2z" fill="#c9c9c9"/></svg>
<svg style="left:937px;top:877px" width="11" height="12"><circle cx="4.500" cy="6" r="3" fill="none" stroke="#c9c9c9" stroke-width="1.400"/><circle cx="8.500" cy="2" r="1.500" fill="#c9c9c9"/><circle cx="8.500" cy="10" r="1.500" fill="#c9c9c9"/><path d="M5 6 L8.500 2 M5 6 L8.500 10" stroke="#c9c9c9" stroke-width="1"/></svg>
<svg style="left:960px;top:877px" width="18" height="12"><path d="M6 11 C3 11 3 7 6 7 C6 3 11 2 13 5 C17 4.500 18 11 14 11Z" fill="#6a6a6a"/><path d="M0 8 H4 M2.500 6 L4.500 8 L2.500 10" stroke="#6a6a6a" fill="none" stroke-width="1.200"/></svg>
<svg style="left:1023px;top:877px" width="16" height="12"><rect x="0" y="0" width="11" height="11" fill="#c9c9c9"/><g fill="#535353"><rect x="0.5" y="0.5" width="2.600" height="2.600"/><rect x="4.1" y="0.5" width="2.600" height="2.600"/><rect x="7.7" y="0.5" width="2.600" height="2.600"/><rect x="0.5" y="4.1" width="2.600" height="2.600"/><rect x="4.1" y="4.1" width="2.600" height="2.600"/><rect x="7.7" y="4.1" width="2.600" height="2.600"/><rect x="0.5" y="7.7" width="2.600" height="2.600"/><rect x="4.1" y="7.7" width="2.600" height="2.600"/><rect x="7.7" y="7.7" width="2.600" height="2.600"/></g><path d="M12 9 h3 l-1.500 2z" fill="#c9c9c9"/></svg>
<svg style="left:1050px;top:877px" width="12" height="11"><rect x="0.500" y="0.500" width="11" height="10" fill="none" stroke="#6a6a6a"/><path d="M2 3 H10 M2 5.500 H10 M2 8 H10" stroke="#6a6a6a"/></svg>
<svg style="left:1075px;top:877px" width="15" height="11"><path d="M0 0.500 H5 L6.500 2 H14.500 V11 H0Z" fill="#c9c9c9"/></svg>
<svg style="left:1103px;top:877px" width="11" height="11"><path d="M0 0 H10.500 V10.500 H4 V4 H0Z" fill="#c9c9c9"/><path d="M0.500 5.500 L3 5.500 L3 8" fill="none" stroke="#c9c9c9" stroke-width="1"/></svg>
<svg style="left:1129px;top:877px" width="11" height="12"><path d="M0.500 2.500 H10.500 M3.500 2.500 V0.800 H7.500 V2.500 M1.500 3 L2 11.500 H9 L9.500 3 M4 4.500 V10 M5.500 4.500 V10 M7 4.500 V10" fill="none" stroke="#6a6a6a" stroke-width="1"/></svg>

<!-- DOCK2 -->
<div class="a" style="left:1170px;top:68px;width:425px;height:825px;background:#3c3c3c"></div>
<div class="a dk" style="left:1171px;top:69px;width:424px;height:11px"></div>
<svg style="left:1581px;top:72px" width="8" height="5"><path d="M0.800 0.300 L3.200 2.500 L0.800 4.700 M4.600 0.300 L7 2.500 L4.600 4.700" fill="none" stroke="#d0d0d0" stroke-width="1.300"/></svg>
<div class="a" style="left:1595px;top:68px;width:2px;height:825px;background:#3a3a3a"></div>
<div class="a dk" style="left:1171px;top:81px;width:424px;height:27px"></div>
<div class="a pb" style="left:1171px;top:107px;width:424px;height:221px"></div>
<div class="a pb" style="left:1171px;top:81px;width:146px;height:27px"></div>
<div class="t b" style="left:1180px;top:90px;font-size:10px;letter-spacing:-0.27px;color:#f0f0f0">EngView Design Parameters</div>
<div class="a" style="left:1420px;top:81px;width:1px;height:26px;background:#3a3a3a"></div>
<div class="t b" style="left:1326px;top:90px;font-size:10px;letter-spacing:-0.27px;color:#a6a6a6">EngView Processes</div>
<div class="a" style="left:1554px;top:81px;width:1px;height:26px;background:#3a3a3a"></div>
<div class="t b" style="left:1429px;top:90px;font-size:10px;letter-spacing:-0.27px;color:#a6a6a6">EngView Step and Repeat</div>
<svg style="left:1578px;top:91px" width="11" height="8"><path d="M0 0.500H10M0 2.500H10M0 4.500H10M0 6.500H10" stroke="#bdbdbd" stroke-width="1" shape-rendering="crispEdges"/></svg>
<div class="a" style="left:1176px;top:114px;width:395px;height:197px;border:1px solid #b4b4b4;border-right:none;overflow:hidden"></div>
<div class="t" style="left:1185px;top:121px;font-size:12px;letter-spacing:-0.2px;color:#f2f2f2;">Parameter</div>
<div class="t" style="left:1259px;top:121px;font-size:12px;letter-spacing:-0.2px;color:#f2f2f2;">Expression</div>
<div class="t" style="left:1367px;top:121px;font-size:12px;letter-spacing:-0.2px;color:#f2f2f2;">Value</div>
<div class="t" style="left:1442px;top:121px;font-size:12px;letter-spacing:-0.2px;color:#f2f2f2;">Remark</div>
<div class="a" style="left:1251px;top:119px;width:1px;height:13px;background:#8e8e8e"></div>
<div class="a" style="left:1359px;top:119px;width:1px;height:13px;background:#8e8e8e"></div>
<div class="a" style="left:1434px;top:119px;width:1px;height:13px;background:#8e8e8e"></div>
<div class="a" style="left:1177px;top:135px;width:393px;height:1px;background:#a8a8a8"></div>
<div class="a" style="left:1178px;top:137px;width:391px;height:1px;background:#e2e2e2"></div>
<div class="a" style="left:1178px;top:137px;width:1px;height:19px;background:#e2e2e2"></div>
<div class="a" style="left:1568px;top:137px;width:1px;height:19px;background:#e2e2e2"></div>
<div class="a" style="left:1178px;top:156px;width:391px;height:1px;background:#9e9e9e"></div>
<svg style="left:1181px;top:142px" width="9" height="9"><rect x="0.500" y="0.500" width="8" height="8" fill="none" stroke="#e8e8e8" stroke-width="1"/><path d="M2.500 4.500 H6.500" stroke="#e8e8e8" stroke-width="1"/></svg>
<div class="t" style="left:1197px;top:141px;font-size:12px;letter-spacing:-0.2px;color:#f2f2f2;">Globals</div>
<div class="a" style="left:1178px;top:158px;width:391px;height:1px;background:#e2e2e2"></div>
<div class="a" style="left:1178px;top:158px;width:1px;height:19px;background:#e2e2e2"></div>
<div class="a" style="left:1568px;top:158px;width:1px;height:19px;background:#e2e2e2"></div>
<div class="a" style="left:1178px;top:177px;width:391px;height:1px;background:#9e9e9e"></div>
<svg style="left:1197px;top:163px" width="9" height="9"><rect x="0.500" y="0.500" width="8" height="8" fill="none" stroke="#e8e8e8" stroke-width="1"/><path d="M2.500 4.500 H6.500" stroke="#e8e8e8" stroke-width="1"/></svg>
<div class="t" style="left:1213px;top:162px;font-size:12px;letter-spacing:-0.2px;color:#f2f2f2;">Main</div>
<div class="a" style="left:1177px;top:177px;width:393px;height:1px;background:#e2e2e2"></div>
<div class="a" style="left:1177px;top:198px;width:393px;height:1px;background:#e2e2e2"></div>
<div class="a" style="left:1250px;top:177px;width:2px;height:22px;background:#e2e2e2"></div>
<div class="a" style="left:1358px;top:177px;width:2px;height:22px;background:#e2e2e2"></div>
<div class="a" style="left:1433px;top:177px;width:2px;height:22px;background:#e2e2e2"></div>
<div class="a" style="left:1569px;top:177px;width:1px;height:22px;background:#e2e2e2"></div>
<div class="t" style="left:1197px;top:183px;font-size:12px;letter-spacing:-0.2px;color:#f2f2f2;">L</div>
<div class="t" style="left:1259px;top:183px;font-size:12px;letter-spacing:-0.2px;color:#f2f2f2;">280</div>
<div class="t" style="left:1367px;top:183px;font-size:12px;letter-spacing:-0.2px;color:#f2f2f2;">280.00</div>
<div class="t" style="left:1442px;top:183px;font-size:12px;letter-spacing:-0.2px;color:#f2f2f2;">Length</div>
<div class="a" style="left:1177px;top:219px;width:393px;height:1px;background:#e2e2e2"></div>
<div class="a" style="left:1250px;top:198px;width:2px;height:22px;background:#e2e2e2"></div>
<div class="a" style="left:1358px;top:198px;width:2px;height:22px;background:#e2e2e2"></div>
<div class="a" style="left:1433px;top:198px;width:2px;height:22px;background:#e2e2e2"></div>
<div class="a" style="left:1569px;top:198px;width:1px;height:22px;background:#e2e2e2"></div>
<div class="t" style="left:1197px;top:204px;font-size:12px;letter-spacing:-0.2px;color:#f2f2f2;">W</div>
<div class="t" style="left:1259px;top:204px;font-size:12px;letter-spacing:-0.2px;color:#f2f2f2;">150</div>
<div class="t" style="left:1367px;top:204px;font-size:12px;letter-spacing:-0.2px;color:#f2f2f2;">150.00</div>
<div class="t" style="left:1442px;top:204px;font-size:12px;letter-spacing:-0.2px;color:#f2f2f2;">Width</div>
<div class="a" style="left:1177px;top:239px;width:393px;height:1px;background:#e2e2e2"></div>
<div class="a" style="left:1250px;top:219px;width:2px;height:21px;background:#e2e2e2"></div>
<div class="a" style="left:1358px;top:219px;width:2px;height:21px;background:#e2e2e2"></div>
<div class="a" style="left:1433px;top:219px;width:2px;height:21px;background:#e2e2e2"></div>
<div class="a" style="left:1569px;top:219px;width:1px;height:21px;background:#e2e2e2"></div>
<div class="t" style="left:1197px;top:225px;font-size:12px;letter-spacing:-0.2px;color:#f2f2f2;">H</div>
<div class="t" style="left:1259px;top:225px;font-size:12px;letter-spacing:-0.2px;color:#f2f2f2;">100</div>
<div class="t" style="left:1367px;top:225px;font-size:12px;letter-spacing:-0.2px;color:#f2f2f2;">100.00</div>
<div class="t" style="left:1442px;top:225px;font-size:12px;letter-spacing:-0.2px;color:#f2f2f2;">Height</div>
<div class="a" style="left:1177px;top:260px;width:393px;height:1px;background:#e2e2e2"></div>
<div class="a" style="left:1250px;top:239px;width:2px;height:22px;background:#e2e2e2"></div>
<div class="a" style="left:1358px;top:239px;width:2px;height:22px;background:#e2e2e2"></div>
<div class="a" style="left:1433px;top:239px;width:2px;height:22px;background:#e2e2e2"></div>
<div class="a" style="left:1569px;top:239px;width:1px;height:22px;background:#e2e2e2"></div>
<div class="t" style="left:1197px;top:246px;font-size:12px;letter-spacing:-0.2px;color:#f2f2f2;">DT</div>
<div class="t" style="left:1259px;top:246px;font-size:12px;letter-spacing:-0.2px;color:#f2f2f2;">dtID</div>
<div class="t" style="left:1367px;top:246px;font-size:12px;letter-spacing:-0.2px;color:#f2f2f2;">-1.00</div>
<div class="t" style="left:1442px;top:246px;font-size:12px;letter-spacing:-0.2px;color:#f2f2f2;">Dimension Type</div>
<div class="a" style="left:1177px;top:281px;width:393px;height:1px;background:#e2e2e2"></div>
<div class="a" style="left:1250px;top:260px;width:2px;height:22px;background:#e2e2e2"></div>
<div class="a" style="left:1358px;top:260px;width:2px;height:22px;background:#e2e2e2"></div>
<div class="a" style="left:1433px;top:260px;width:2px;height:22px;background:#e2e2e2"></div>
<div class="a" style="left:1569px;top:260px;width:1px;height:22px;background:#e2e2e2"></div>
<div class="t" style="left:1197px;top:267px;font-size:12px;letter-spacing:-0.2px;color:#f2f2f2;">UL</div>
<div class="t" style="left:1259px;top:267px;font-size:12px;letter-spacing:-0.2px;color:#f2f2f2;">Yes</div>
<div class="t" style="left:1367px;top:267px;font-size:12px;letter-spacing:-0.2px;color:#f2f2f2;">1.00</div>
<div class="t" style="left:1442px;top:267px;font-size:12px;letter-spacing:-0.2px;color:#f2f2f2;">Use of Layers</div>
<div class="a" style="left:1178px;top:284px;width:391px;height:1px;background:#e2e2e2"></div>
<div class="a" style="left:1178px;top:284px;width:1px;height:19px;background:#e2e2e2"></div>
<div class="a" style="left:1568px;top:284px;width:1px;height:19px;background:#e2e2e2"></div>
<div class="a" style="left:1178px;top:303px;width:391px;height:1px;background:#9e9e9e"></div>
<svg style="left:1197px;top:289px" width="9" height="9"><rect x="0.500" y="0.500" width="8" height="8" fill="none" stroke="#e8e8e8" stroke-width="1"/><path d="M2.500 4.500 H6.500" stroke="#e8e8e8" stroke-width="1"/><path d="M4.500 2.500 V6.500" stroke="#e8e8e8" stroke-width="1"/></svg>
<div class="t" style="left:1213px;top:288px;font-size:12px;letter-spacing:-0.2px;color:#f2f2f2;">Layers</div>
<div class="a" style="left:1178px;top:306px;width:391px;height:1px;background:#e2e2e2"></div>
<div class="a" style="left:1178px;top:306px;width:1px;height:5px;background:#e2e2e2"></div>
<div class="a" style="left:1571px;top:114px;width:18px;height:197px;background:#f0f0f0"></div>
<div class="a" style="left:1572px;top:132px;width:16px;height:67px;background:#cdcdcd"></div>
<svg style="left:1575px;top:120px" width="10" height="7"><path d="M1 6 L5 1.500 L9 6" fill="none" stroke="#404040" stroke-width="1.700"/></svg>
<svg style="left:1575px;top:298px" width="10" height="7"><path d="M1 1 L5 5.500 L9 1" fill="none" stroke="#404040" stroke-width="1.700"/></svg>
<svg style="left:1562px;top:313px" width="13" height="11"><path d="M9.500 8.500 A4 4 0 1 1 10 4" fill="none" stroke="#626262" stroke-width="1.100"/><path d="M8 3.500 H11 V1" fill="none" stroke="#626262" stroke-width="1.100"/></svg>
<div class="a dk" style="left:1171px;top:330px;width:424px;height:27px"></div>
<div class="a pb" style="left:1171px;top:356px;width:424px;height:202px"></div>
<div class="a pb" style="left:1171px;top:330px;width:96px;height:27px"></div>
<div class="t b" style="left:1180px;top:339px;font-size:10px;letter-spacing:-0.27px;color:#f0f0f0">EngView Articles</div>
<svg style="left:1578px;top:340px" width="11" height="8"><path d="M0 0.500H10M0 2.500H10M0 4.500H10M0 6.500H10" stroke="#bdbdbd" stroke-width="1" shape-rendering="crispEdges"/></svg>
<div class="a" style="left:1176px;top:363px;width:413px;height:174px;border:1px solid #dcdcdc"></div>
<div class="t" style="left:1185px;top:370px;font-size:12px;letter-spacing:-0.2px;color:#f2f2f2;">Article</div>
<div class="t" style="left:1284px;top:370px;font-size:12px;letter-spacing:-0.2px;color:#f2f2f2;">Front</div>
<div class="t" style="left:1414px;top:370px;font-size:12px;letter-spacing:-0.2px;color:#f2f2f2;">Rear</div>
<div class="t" style="left:1544px;top:370px;font-size:12px;letter-spacing:-0.2px;color:#f2f2f2;">In Use</div>
<div class="a" style="left:1276px;top:368px;width:1px;height:13px;background:#8e8e8e"></div>
<div class="a" style="left:1406px;top:368px;width:1px;height:13px;background:#8e8e8e"></div>
<div class="a" style="left:1536px;top:368px;width:1px;height:13px;background:#8e8e8e"></div>
<div class="a" style="left:1586px;top:368px;width:1px;height:13px;background:#8e8e8e"></div>
<div class="a" style="left:1177px;top:384px;width:411px;height:1px;background:#a8a8a8"></div>
<div class="a" style="left:1178px;top:386px;width:408px;height:1px;background:#e2e2e2"></div>
<div class="a" style="left:1178px;top:386px;width:1px;height:19px;background:#e2e2e2"></div>
<div class="a" style="left:1585px;top:386px;width:1px;height:19px;background:#e2e2e2"></div>
<div class="a" style="left:1178px;top:405px;width:408px;height:1px;background:#9e9e9e"></div>
<svg style="left:1181px;top:391px" width="9" height="9"><rect x="0.500" y="0.500" width="8" height="8" fill="none" stroke="#e8e8e8" stroke-width="1"/><path d="M2.500 4.500 H6.500" stroke="#e8e8e8" stroke-width="1"/></svg>
<div class="t" style="left:1197px;top:390px;font-size:12px;letter-spacing:-0.2px;color:#f2f2f2;letter-spacing:-0.62px">FEFCO 0306 Lid</div>
<div class="a" style="left:1177px;top:406px;width:409px;height:1px;background:#e2e2e2"></div>
<div class="a" style="left:1177px;top:426px;width:409px;height:1px;background:#e2e2e2"></div>
<div class="a" style="left:1275px;top:406px;width:2px;height:21px;background:#e2e2e2"></div>
<div class="a" style="left:1405px;top:406px;width:2px;height:21px;background:#e2e2e2"></div>
<div class="a" style="left:1535px;top:406px;width:2px;height:21px;background:#e2e2e2"></div>
<div class="a" style="left:1585px;top:406px;width:1px;height:21px;background:#e2e2e2"></div>
<div class="t" style="left:1197px;top:411px;font-size:12px;letter-spacing:-0.2px;color:#f2f2f2;">Poppies Lid</div>
<div class="t" style="left:1296px;top:411px;font-size:12px;letter-spacing:-0.2px;color:#f2f2f2;">Poppies</div>
<div class="t" style="left:1427px;top:411px;font-size:12px;letter-spacing:-0.2px;color:#f2f2f2;">&lt;None&gt;</div>
<div class="t" style="left:1544px;top:411px;font-size:12px;letter-spacing:-0.2px;color:#f2f2f2;">1</div>
<div class="a" style="left:1177px;top:427px;width:409px;height:1px;background:#e2e2e2"></div>
<div class="a" style="left:1177px;top:447px;width:409px;height:1px;background:#e2e2e2"></div>
<div class="a" style="left:1275px;top:427px;width:2px;height:21px;background:#e2e2e2"></div>
<div class="a" style="left:1405px;top:427px;width:2px;height:21px;background:#e2e2e2"></div>
<div class="a" style="left:1535px;top:427px;width:2px;height:21px;background:#e2e2e2"></div>
<div class="a" style="left:1585px;top:427px;width:1px;height:21px;background:#e2e2e2"></div>
<div class="a" style="left:1277px;top:428px;width:128px;height:19px;background:#7096bd"></div>
<div class="t" style="left:1197px;top:432px;font-size:12px;letter-spacing:-0.2px;color:#f2f2f2;">3 Poppies Lid</div>
<div class="t" style="left:1296px;top:432px;font-size:12px;letter-spacing:-0.2px;color:#f2f2f2;">3 Poppies</div>
<div class="t" style="left:1427px;top:432px;font-size:12px;letter-spacing:-0.2px;color:#f2f2f2;">&lt;None&gt;</div>
<div class="t" style="left:1544px;top:432px;font-size:12px;letter-spacing:-0.2px;color:#f2f2f2;">0</div>
<div class="t b" style="left:1376px;top:429px;font-size:16px;color:#fff">3</div>
<div class="a" style="left:1178px;top:449px;width:408px;height:1px;background:#e2e2e2"></div>
<div class="a" style="left:1178px;top:449px;width:1px;height:19px;background:#e2e2e2"></div>
<div class="a" style="left:1585px;top:449px;width:1px;height:19px;background:#e2e2e2"></div>
<div class="a" style="left:1178px;top:468px;width:408px;height:1px;background:#9e9e9e"></div>
<svg style="left:1181px;top:454px" width="9" height="9"><rect x="0.500" y="0.500" width="8" height="8" fill="none" stroke="#e8e8e8" stroke-width="1"/><path d="M2.500 4.500 H6.500" stroke="#e8e8e8" stroke-width="1"/></svg>
<div class="t" style="left:1197px;top:453px;font-size:12px;letter-spacing:-0.2px;color:#f2f2f2;letter-spacing:-0.62px">FEFCO 0306 Body</div>
<div class="a" style="left:1177px;top:469px;width:409px;height:1px;background:#e2e2e2"></div>
<div class="a" style="left:1177px;top:489px;width:409px;height:1px;background:#e2e2e2"></div>
<div class="a" style="left:1275px;top:469px;width:2px;height:21px;background:#e2e2e2"></div>
<div class="a" style="left:1405px;top:469px;width:2px;height:21px;background:#e2e2e2"></div>
<div class="a" style="left:1535px;top:469px;width:2px;height:21px;background:#e2e2e2"></div>
<div class="a" style="left:1585px;top:469px;width:1px;height:21px;background:#e2e2e2"></div>
<div class="t" style="left:1197px;top:474px;font-size:12px;letter-spacing:-0.2px;color:#f2f2f2;">Pink Body</div>
<div class="t" style="left:1296px;top:474px;font-size:12px;letter-spacing:-0.2px;color:#f2f2f2;">Pink</div>
<div class="t" style="left:1427px;top:474px;font-size:12px;letter-spacing:-0.2px;color:#f2f2f2;">&lt;None&gt;</div>
<div class="t" style="left:1544px;top:474px;font-size:12px;letter-spacing:-0.2px;color:#f2f2f2;">0</div>
<div class="a" style="left:1177px;top:490px;width:409px;height:1px;background:#e2e2e2"></div>
<div class="a" style="left:1177px;top:510px;width:409px;height:1px;background:#e2e2e2"></div>
<div class="a" style="left:1275px;top:490px;width:2px;height:21px;background:#e2e2e2"></div>
<div class="a" style="left:1405px;top:490px;width:2px;height:21px;background:#e2e2e2"></div>
<div class="a" style="left:1535px;top:490px;width:2px;height:21px;background:#e2e2e2"></div>
<div class="a" style="left:1585px;top:490px;width:1px;height:21px;background:#e2e2e2"></div>
<div class="t" style="left:1197px;top:495px;font-size:12px;letter-spacing:-0.2px;color:#f2f2f2;">Red Body</div>
<div class="t" style="left:1296px;top:495px;font-size:12px;letter-spacing:-0.2px;color:#f2f2f2;">Red</div>
<div class="t" style="left:1427px;top:495px;font-size:12px;letter-spacing:-0.2px;color:#f2f2f2;">&lt;None&gt;</div>
<div class="t" style="left:1544px;top:495px;font-size:12px;letter-spacing:-0.2px;color:#f2f2f2;">1</div>
<svg style="left:1466px;top:543px" width="13" height="13"><defs><linearGradient id="gna" x1="0" y1="0" x2="0" y2="1"><stop offset="0" stop-color="#f4f4f4"/><stop offset="1" stop-color="#b4b4b4"/></linearGradient></defs><rect x="0" y="1" width="12.500" height="11" fill="url(#gna)"/><rect x="0" y="0" width="12.500" height="1" fill="#1a1a1a"/><path d="M0 6 L5 11 H0Z" fill="#111"/></svg>
<svg style="left:1498px;top:544px" width="11" height="12"><path d="M0.500 2.500 H10.500 M3.500 2.500 V0.800 H7.500 V2.500 M1.500 3 L2 11.500 H9 L9.500 3 M4 4.500 V10 M5.500 4.500 V10 M7 4.500 V10" fill="none" stroke="#666" stroke-width="1"/></svg>
<svg style="left:1528px;top:544px" width="15" height="13"><path d="M7.500 0.500 L14 7 H9 V12.500 H6 V7 H1Z" fill="#e8e8e8" stroke="#2a2a2a" stroke-width="0.800"/></svg>
<svg style="left:1561px;top:545px" width="13" height="12"><path d="M6.500 11.500 L12 6 H8.500 V0.500 H4.500 V6 H1Z" fill="#666"/></svg>
<div class="a dk" style="left:1171px;top:561px;width:424px;height:27px"></div>
<div class="a pb" style="left:1171px;top:587px;width:424px;height:306px"></div>
<div class="a pb" style="left:1171px;top:561px;width:74px;height:27px"></div>
<div class="t b" style="left:1180px;top:570px;font-size:10px;letter-spacing:-0.27px;color:#f0f0f0">EngView 3D</div>
<svg style="left:1578px;top:571px" width="11" height="8"><path d="M0 0.500H10M0 2.500H10M0 4.500H10M0 6.500H10" stroke="#bdbdbd" stroke-width="1" shape-rendering="crispEdges"/></svg>

<!-- 3D -->
<div class="a" style="left:1230px;top:593px;width:2px;height:17px;background:#8a8a8a"></div>
<div class="a" style="left:1266px;top:593px;width:2px;height:17px;background:#8a8a8a"></div>
<div class="a" style="left:1302px;top:593px;width:2px;height:17px;background:#8a8a8a"></div>
<div class="a" style="left:1386px;top:593px;width:2px;height:17px;background:#8a8a8a"></div>
<svg style="left:1179px;top:592px" width="19" height="19"><circle cx="8" cy="8" r="7" fill="none" stroke="#d6d6d6" stroke-width="1.600"/><path d="M13 13 L17.500 17.500" stroke="#d6d6d6" stroke-width="2.600"/><path d="M8 3 V13 M3 8 H13 M6.500 4.500 L8 3 L9.500 4.500 M6.500 11.500 L8 13 L9.500 11.500 M4.500 6.500 L3 8 L4.500 9.500 M11.500 6.500 L13 8 L11.500 9.500" fill="none" stroke="#d6d6d6" stroke-width="1"/></svg>
<svg style="left:1203px;top:592px" width="20" height="19"><ellipse cx="9.500" cy="11.500" rx="8.500" ry="4" fill="none" stroke="#d6d6d6" stroke-width="1.500"/><ellipse cx="9.500" cy="9" rx="4" ry="8" fill="none" stroke="#d6d6d6" stroke-width="1.500" transform="rotate(-15 9.500 9)"/><path d="M3 1 L8 3 L4.500 6Z" fill="#d6d6d6"/></svg>
<svg style="left:1217px;top:608px" width="5" height="3"><path d="M0 0 H5 L2.500 3Z" fill="#f0f0f0"/></svg>
<svg style="left:1239px;top:592px" width="20" height="19"><path d="M1 6 L6 1 H17 L12 6Z" fill="#f4f4f4"/><path d="M1 6 H12 V17 H1Z" fill="#d8d8d8"/><path d="M12 6 L17 1 V12 L12 17Z" fill="#9a9a9a"/></svg>
<svg style="left:1254px;top:608px" width="5" height="3"><path d="M0 0 H5 L2.500 3Z" fill="#f0f0f0"/></svg>
<svg style="left:1279px;top:593px" width="12" height="17"><path d="M1 0 V16 L11 8Z" fill="#e8e8e8"/></svg>
<svg style="left:1290px;top:608px" width="5" height="3"><path d="M0 0 H5 L2.500 3Z" fill="#f0f0f0"/></svg>
<svg style="left:1311px;top:592px" width="19" height="19"><path d="M1 1 H18 V18 H1Z" fill="none" stroke="#d6d6d6" stroke-width="1.600"/><rect x="4" y="12" width="11" height="6" fill="none" stroke="#d6d6d6" stroke-width="1.300"/><rect x="6" y="14" width="3" height="3" fill="#d6d6d6"/><path d="M5 9 C5 5 9 4 12 4.500 M10.500 2 L13.500 4.500 L10.500 7.500" fill="none" stroke="#d6d6d6" stroke-width="1.600"/></svg>
<svg style="left:1336px;top:592px" width="16" height="19"><circle cx="8" cy="7.500" r="7.500" fill="#ececec"/><path d="M4 13 H12 V15.500 H4Z" fill="#ececec"/><path d="M5 16.500 H11 L9.500 18.500 H6.500Z" fill="#b8b8b8"/></svg>
<svg style="left:1360px;top:592px" width="17" height="19"><path d="M1 1 H11 L16 6 V18 H1Z" fill="none" stroke="#d6d6d6" stroke-width="1.500"/><path d="M11 1 V6 H16" fill="none" stroke="#d6d6d6" stroke-width="1.200"/><path d="M4 8.500 H12 M8 5.500 V11.500 M4 14 H12 M5 12 V16" stroke="#d6d6d6" stroke-width="1.500"/></svg>
<svg style="left:1396px;top:593px" width="17" height="17"><path d="M1 6 L5 1.500 H16 V11 L12 16 H1Z M1 6 H12 V16 M12 6 L16 1.500" fill="none" stroke="#d6d6d6" stroke-width="1.500"/><path d="M4 9 L6.500 6.500 H11 V10.500 L8.500 13 H4Z M4 9 H8.500 V13 M8.500 9 L11 6.500" fill="none" stroke="#d6d6d6" stroke-width="1.200"/></svg>
<svg style="left:1418px;top:592px" width="20" height="19"><path d="M9 1 C4 3 3 8 5 11 L1.500 11 L7 16 L10.500 9.500 L7.500 10.500 C6 8 6.500 4 9 1Z" fill="#e8e8e8"/><path d="M10 18.500 C15 16 16 11 14.500 8.500 L18 8.500 L13 3.500 L9.500 10 L12.500 9.500 C13.500 12 12.500 16 10 18.500Z" fill="#e8e8e8"/></svg>
<svg style="left:1443px;top:592px" width="18" height="19"><path d="M1 5 L5 1 H17 L13 5Z" fill="#f0f0f0"/><path d="M13 5 L17 1 V10 L13 14Z" fill="#9a9a9a"/><path d="M1 5 H13 V14 H1Z" fill="#e4e4e4" stroke="#d6d6d6" stroke-width="1"/><path d="M1.500 14 V19 M12.500 14 V19 M2 16.500 H12 M4 15 L2.500 16.500 L4 18 M10 15 L11.500 16.500 L10 18" fill="none" stroke="#d6d6d6" stroke-width="1"/></svg>
<svg style="left:0;top:0" width="1600" height="898"><defs><linearGradient id="gtop" x1="0" y1="0" x2="1" y2="1"><stop offset="0" stop-color="#f2f2f2"/><stop offset="1" stop-color="#e2e2e2"/></linearGradient><linearGradient id="glong" x1="0" y1="1" x2="1" y2="0"><stop offset="0" stop-color="#e8e8e8"/><stop offset="1" stop-color="#b8b8b8"/></linearGradient><linearGradient id="gshort" x1="0" y1="0" x2="1" y2="1"><stop offset="0" stop-color="#d8d8d8"/><stop offset="1" stop-color="#ececec"/></linearGradient><linearGradient id="gbr" x1="0" y1="1" x2="1" y2="0"><stop offset="0" stop-color="#b82428"/><stop offset="1" stop-color="#a82024"/></linearGradient><linearGradient id="gbl" x1="0" y1="0" x2="1" y2="1"><stop offset="0" stop-color="#8c1a1c"/><stop offset="1" stop-color="#a62022"/></linearGradient><clipPath id="ctop"><polygon points="1234.1,702.7 1411.9,648.7 1501.4,683.5 1323.6,783.7"/></clipPath><clipPath id="cshort"><polygon points="1234.1,702.7 1323.6,783.7 1326.0,817.2 1250.1,744.4"/></clipPath><clipPath id="clong"><polygon points="1323.6,783.7 1501.4,683.5 1490.2,713.4 1326.0,817.2"/></clipPath></defs><rect x="1177" y="614" width="411.500" height="253" fill="#bdc8d8"/><polygon points="1252.8,746.6 1327.6,817.2 1332.5,854.6 1260.8,779.7" fill="url(#gbl)"/><polygon points="1327.6,817.2 1489.4,714.5 1480.6,743.6 1332.5,854.6" fill="url(#gbr)"/><polygon points="1234.1,702.7 1411.9,648.7 1501.4,683.5 1323.6,783.7" fill="url(#gtop)"/><polygon points="1234.1,702.7 1323.6,783.7 1326.0,817.2 1250.1,744.4" fill="url(#gshort)"/><polygon points="1323.6,783.7 1501.4,683.5 1490.2,713.4 1326.0,817.2" fill="url(#glong)"/><g clip-path="url(#ctop)"><use href="#pop3" transform="translate(1288.1,703.0) rotate(-8) scale(0.246,0.115) rotate(60)"/><use href="#pop3" transform="translate(1342.9,682.1) rotate(-5) scale(0.203,0.083) rotate(240)"/><use href="#pop3" transform="translate(1338.3,712.1) rotate(-5) scale(0.235,0.120) rotate(240)"/><use href="#pop3" transform="translate(1330.3,745.0) rotate(-5) scale(0.281,0.168) rotate(60)"/><use href="#pop3" transform="translate(1384.3,672.8) rotate(-3) scale(0.174,0.075) rotate(120)"/><use href="#pop3" transform="translate(1384.3,692.0) rotate(-3) scale(0.214,0.096) rotate(240)"/><use href="#pop3" transform="translate(1394.5,716.9) rotate(-3) scale(0.230,0.123) rotate(180)"/><use href="#pop3" transform="translate(1412.4,662.1) rotate(0) scale(0.155,0.064) rotate(300)"/><use href="#pop3" transform="translate(1428.7,680.3) rotate(0) scale(0.176,0.080) rotate(240)"/><use href="#pop3" transform="translate(1427.1,700.9) rotate(0) scale(0.214,0.102) rotate(0)"/><use href="#pop3" transform="translate(1467.2,679.5) rotate(3) scale(0.176,0.080) rotate(240)"/><use href="#pop3" transform="translate(1303.6,680.8) rotate(-17) scale(0.155,0.059) rotate(0)"/><use href="#pop3" transform="translate(1259.5,695.5) rotate(-17) scale(0.120,0.037) rotate(180)"/><use href="#pop3" transform="translate(1375.8,658.9) rotate(-17) scale(0.120,0.037) rotate(120)"/><use href="#pop3" transform="translate(1341.0,670.1) rotate(-17) scale(0.094,0.027) rotate(240)"/><use href="#pop3" transform="translate(1454.7,664.2) rotate(20) scale(0.120,0.043) rotate(60)"/><use href="#pop3" transform="translate(1426.6,653.5) rotate(20) scale(0.134,0.032) rotate(60)"/><use href="#pop3" transform="translate(1409.2,650.1) rotate(10) scale(0.080,0.021) rotate(300)"/></g><g clip-path="url(#cshort)"><use href="#pop3" transform="translate(1243.4,720.9) rotate(-15) scale(0.107,0.201) rotate(180)"/><use href="#pop3" transform="translate(1271.0,741.8) rotate(-12) scale(0.139,0.203) rotate(240)"/><use href="#pop3" transform="translate(1305.7,788.3) rotate(-12) scale(0.155,0.267) rotate(240)"/></g><g clip-path="url(#clong)"><use href="#pop3" transform="translate(1347.7,788.3) rotate(12) scale(0.187,0.235) rotate(180)"/><use href="#pop3" transform="translate(1391.8,756.2) rotate(10) scale(0.171,0.235) rotate(180)"/><use href="#pop3" transform="translate(1430.6,736.1) rotate(10) scale(0.139,0.203) rotate(300)"/><use href="#pop3" transform="translate(1464.0,712.1) rotate(8) scale(0.118,0.176) rotate(60)"/><use href="#pop3" transform="translate(1488.1,700.1) rotate(8) scale(0.096,0.139) rotate(60)"/></g><path d="M1324.4 785.1 L1326.6 817.2" stroke="#2a1a1a" stroke-width="0.800" stroke-dasharray="3 2"/><path d="M1328.1 817.2 L1332.5 854.1" stroke="#3a1010" stroke-width="0.800" stroke-dasharray="5 2"/></svg>
<svg style="left:1185px;top:878px" width="13" height="12"><path d="M10 8.500 A4.500 4.500 0 1 1 10.500 4" fill="none" stroke="#bdbdbd" stroke-width="1.100"/><path d="M8 4 H11.500 V0.800" fill="none" stroke="#bdbdbd" stroke-width="1.100"/></svg>
<div class="a" style="left:1209px;top:878px;width:12px;height:12px;background:#fff;border:1px solid #333"></div>
<svg style="left:1210px;top:879px" width="10" height="10"><path d="M1.500 5 L4 7.500 L8.500 2" fill="none" stroke="#111" stroke-width="1.600"/></svg>
<div class="t" style="left:1225px;top:879px;font-size:11px;letter-spacing:-0.2px;color:#f2f2f2">Enable Auto Refresh</div>
<div class="a" style="left:1564px;top:878px;width:12px;height:10px;background:#6a6a6a"></div>
<svg style="left:1577px;top:886px" width="4" height="3"><path d="M0 0 H4 L2 2.500Z" fill="#7a7a7a"/></svg>

</body></html>
